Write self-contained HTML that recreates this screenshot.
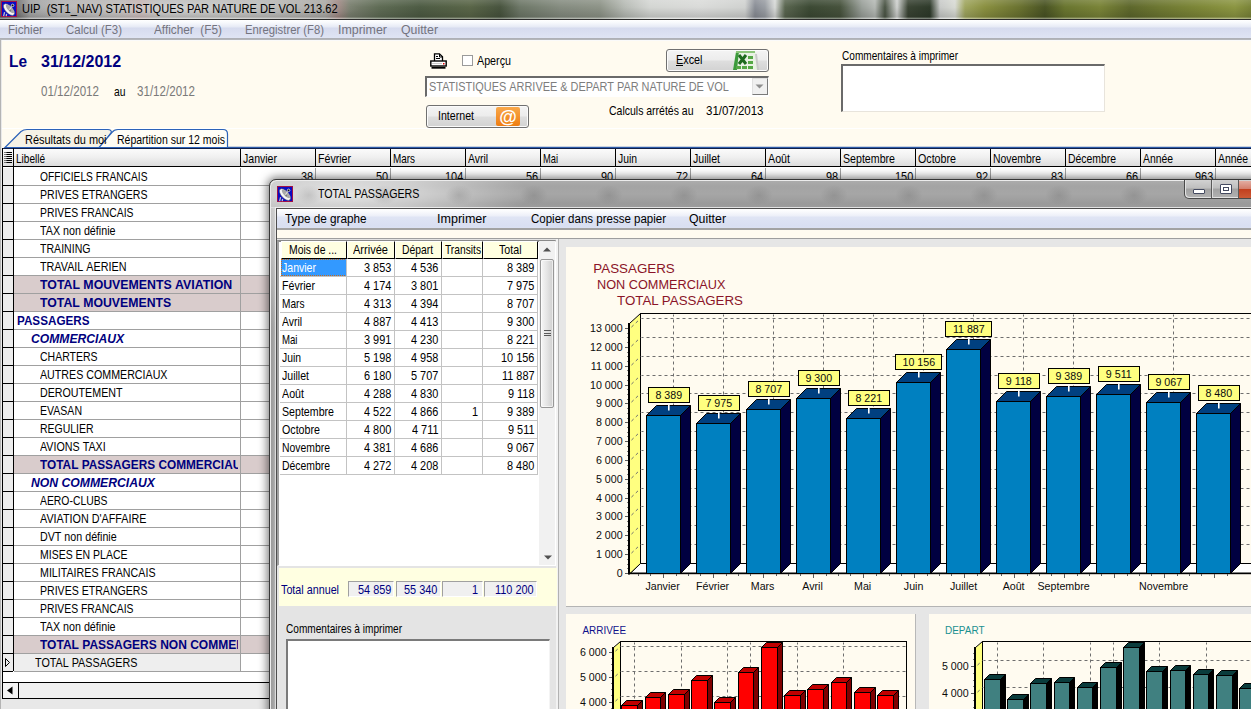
<!DOCTYPE html>
<html lang="fr"><head><meta charset="utf-8"><title>UIP (ST1_NAV) STATISTIQUES PAR NATURE DE VOL</title>
<style>
html,body{margin:0;padding:0;background:#fff;}
body{width:1251px;height:709px;overflow:hidden;position:relative;font-family:"Liberation Sans",Arial,sans-serif;}
#root{position:absolute;left:0;top:0;width:1251px;height:709px;overflow:hidden;}
#root div,#root svg,#root span.t{position:absolute;}
span.t{white-space:nowrap;transform-origin:0 50%;display:block;}
svg text{white-space:pre;}
</style></head><body><div id="root">
<div style="left:0px;top:0px;width:1251px;height:20px;background:radial-gradient(ellipse 190px 16px at 170px 9px,rgba(255,255,255,.5) 0,rgba(255,255,255,0) 100%),linear-gradient(180deg,rgba(255,255,255,.14) 0,rgba(255,255,255,0) 35%,rgba(0,0,0,.14) 86%,rgba(255,255,255,.35) 90%,rgba(255,255,255,.35) 95%,rgba(0,0,0,0) 96%),linear-gradient(90deg,#5c5c5c 0px,#6e6e6e 18px,#9a9a9a 30px,#a6a6a6 60px,#a8a4a2 120px,#b09a98 140px,#a9a9a7 160px,#adadab 250px,#a8a6a2 325px,#a08884 338px,#7a8070 350px,#5f6c55 380px,#4e5c44 420px,#5a6648 470px,#48543e 500px,#6e7868 520px,#858c80 560px,#8e9488 600px,#b8bcb6 625px,#d4d6d3 650px,#dadbd9 700px,#d0d2d0 745px,#8a8e96 755px,#9a9ea4 765px,#d8dad8 775px,#5a6650 785px,#3c4a34 810px,#46523c 840px,#9aa09a 862px,#b4b8b4 875px,#4a5444 885px,#d0d2d0 897px,#3a4434 908px,#2e3a2a 930px,#c8cac8 940px,#d8dad4 955px,#a0a660 965px,#8a9040 985px,#6a7230 1020px,#4a5424 1045px,#6a7630 1065px,#7a8438 1100px,#5e682c 1130px,#6e7832 1160px,#7e8838 1200px,#8c9642 1235px,#7a8438 1251px);"></div>
<svg style="left:1px;top:1px" width="16" height="16" viewBox="0 0 16 16"><rect x="0" y="0" width="16" height="16" fill="#0a0ac4"/><rect x="0.5" y="0.5" width="15" height="15" fill="none" stroke="#a01048"/><path d="M3.6 11.2 L2.6 15.2 M5.6 12.8 L5.2 15.2" stroke="#c4c4c4" stroke-width="1.3" fill="none"/><ellipse cx="8" cy="8.6" rx="7.2" ry="3.6" transform="rotate(47 8 8.6)" fill="#f6f6f6" stroke="#5a5a5a" stroke-width="0.5"/><ellipse cx="8.9" cy="7.9" rx="5.6" ry="2.1" transform="rotate(47 8.9 7.9)" fill="#a8a8a8"/><path d="M8.4 8.6 L11 5.2" stroke="#ececec" stroke-width="1"/><circle cx="9.2" cy="9.6" r="0.9" fill="#7a7a7a"/><circle cx="11.6" cy="4.4" r="1.3" fill="#101010" stroke="#e4e4e4" stroke-width="0.8"/></svg>
<span class="t" style="left:22.00px;top:2.84px;font-size:12px;line-height:12px;color:#000;transform:scaleX(0.9238);">UIP&nbsp;&nbsp;(ST1_NAV)&nbsp;STATISTIQUES&nbsp;PAR&nbsp;NATURE&nbsp;DE&nbsp;VOL&nbsp;213.62</span>
<div style="left:0px;top:19px;width:1251px;height:1px;background:#2c2c2c;"></div>
<div style="left:0px;top:20px;width:1251px;height:21px;background:linear-gradient(180deg,#ffffff 0,#f6f8fc 3px,#e6eaf5 7px,#d6dbee 8px,#dfe4f3 18px,#aeb0b6 18.5px,#b4b6ba 19.5px,#fafafa 20px,#fafafa 21px);"></div>
<span class="t" style="left:8.00px;top:24.04px;font-size:12px;line-height:12px;color:#74747f;transform:scaleX(0.9720);">Fichier</span>
<span class="t" style="left:66.00px;top:24.04px;font-size:12px;line-height:12px;color:#74747f;transform:scaleX(0.9544);">Calcul&nbsp;(F3)</span>
<span class="t" style="left:154.00px;top:24.04px;font-size:12px;line-height:12px;color:#74747f;transform:scaleX(0.9836);">Afficher&nbsp;&nbsp;(F5)</span>
<span class="t" style="left:245.00px;top:24.04px;font-size:12px;line-height:12px;color:#74747f;transform:scaleX(0.9402);">Enregistrer&nbsp;(F8)</span>
<span class="t" style="left:338.00px;top:24.04px;font-size:12px;line-height:12px;color:#74747f;transform:scaleX(1.0352);">Imprimer</span>
<span class="t" style="left:401.00px;top:24.04px;font-size:12px;line-height:12px;color:#74747f;transform:scaleX(1.0274);">Quitter</span>
<div style="left:0px;top:41px;width:1251px;height:107px;background:#fffbf0;"></div>
<div style="left:0px;top:128px;width:1251px;height:1px;background:#ffffff;"></div>
<div style="left:0px;top:40px;width:2px;height:669px;background:#e9e9e9;"></div>
<div style="left:0px;top:40px;width:1px;height:669px;background:#b4b4b4;"></div>
<span class="t" style="left:9.00px;top:54.06px;font-size:16px;line-height:16px;color:#00007e;font-weight:bold;transform:scaleX(0.9640);">Le</span>
<span class="t" style="left:41.00px;top:54.06px;font-size:16px;line-height:16px;color:#00007e;font-weight:bold;">31/12/2012</span>
<span class="t" style="left:41.00px;top:84.15px;font-size:14px;line-height:14px;color:#7a7a7a;transform:scaleX(0.8277);">01/12/2012</span>
<span class="t" style="left:114.00px;top:85.00px;font-size:13px;line-height:13px;color:#000;transform:scaleX(0.7953);">au</span>
<span class="t" style="left:137.00px;top:84.15px;font-size:14px;line-height:14px;color:#7a7a7a;transform:scaleX(0.8277);">31/12/2012</span>
<svg style="left:430px;top:53px" width="17" height="17" viewBox="0 0 17 17"><path d="M4.5 8 V0.8 H9.5 L12.5 3.8 V8" fill="#fff" stroke="#000" stroke-width="1.3"/><path d="M9.5 1 V4 H12.5" fill="none" stroke="#000"/><path d="M6 3.5h2M6 5.5h4" stroke="#000"/><rect x="0.8" y="8" width="15.4" height="5" fill="#fff" stroke="#000" stroke-width="1.4"/><path d="M2.5 10.5h10" stroke="#999" stroke-dasharray="1 1"/><rect x="13" y="10" width="1.5" height="1.5" fill="#e00000"/><path d="M1.5 14.8h14" stroke="#000" stroke-width="1.8"/></svg>
<div style="left:462px;top:55px;width:11px;height:11px;background:#fff;border:1px solid #9a9a9a;box-sizing:border-box;"></div>
<span class="t" style="left:477.30px;top:54.30px;font-size:13px;line-height:13px;color:#000;transform:scaleX(0.8254);">Aperçu</span>
<div style="left:666px;top:49px;width:103px;height:23px;background:linear-gradient(180deg,#f4f4f4 0,#ececec 48%,#dedede 52%,#d2d2d2 100%);border:1px solid #707070;border-radius:3px;box-sizing:border-box;box-shadow:inset 0 0 0 1px #fbfbfb;"></div>
<span class="t" style="left:676.00px;top:53.00px;font-size:13px;line-height:13px;color:#000;transform:scaleX(0.8336);">Excel</span>
<div style="left:676px;top:65px;width:7px;height:1px;background:#000;"></div>
<svg style="left:731px;top:51px" width="30" height="20" viewBox="0 0 30 20"><path d="M2 19 L5 1 L24 1 L26 3 L27 19 Z" fill="#e9f2e4"/><path d="M2 19 L5 1 L8 0 L6 19 Z" fill="#3c9a3c"/><path d="M5 1 L24 1" stroke="#8cc67a" stroke-width="2"/><g fill="#55a845"><rect x="17" y="5" width="5" height="3"/><rect x="17" y="10" width="5" height="3"/><rect x="17" y="15" width="5" height="3"/><rect x="11" y="15" width="5" height="3"/><rect x="5" y="15" width="5" height="3"/></g><path d="M8 4 L15 13 M15 4 L8 13" stroke="#1e6a1e" stroke-width="3"/><path d="M25 3 L27 19" stroke="#c9c9c9" stroke-width="2"/></svg>
<div style="left:425px;top:76px;width:344px;height:21px;background:#fff;border-top:2px solid #6a6a6a;border-left:2px solid #6a6a6a;border-right:1px solid #fff;border-bottom:1px solid #fff;box-sizing:border-box;"></div>
<span class="t" style="left:429.40px;top:80.00px;font-size:13px;line-height:13px;color:#7d7d7d;transform:scaleX(0.8401);">STATISTIQUES&nbsp;ARRIVEE&nbsp;&amp;&nbsp;DEPART&nbsp;PAR&nbsp;NATURE&nbsp;DE&nbsp;VOL</span>
<div style="left:752px;top:78px;width:16px;height:17px;background:#f0f0f0;border-right:1px solid #7a7a7a;border-bottom:1px solid #7a7a7a;border-left:1px solid #e0e0e0;border-top:1px solid #e0e0e0;box-sizing:border-box;"></div>
<svg style="left:755px;top:84px" width="9" height="5" viewBox="0 0 9 5"><path d="M0.5 0.5 H8.5 L4.5 4.5 Z" fill="#8e8e8e"/></svg>
<div style="left:426px;top:105px;width:103px;height:23px;background:linear-gradient(180deg,#f4f4f4 0,#ececec 48%,#dedede 52%,#d2d2d2 100%);border:1px solid #707070;border-radius:3px;box-sizing:border-box;box-shadow:inset 0 0 0 1px #fbfbfb;"></div>
<span class="t" style="left:437.50px;top:109.00px;font-size:13px;line-height:13px;color:#000;transform:scaleX(0.8166);">Internet</span>
<svg style="left:496px;top:107px" width="25" height="19" viewBox="0 0 25 19"><defs><linearGradient id="og" x1="0" y1="0" x2="0" y2="1"><stop offset="0" stop-color="#f9a84a"/><stop offset="1" stop-color="#ee7d12"/></linearGradient></defs><rect x="0" y="0" width="24" height="19" rx="2" fill="url(#og)"/><text x="12" y="15.5" font-family="Liberation Sans, sans-serif" font-size="18" font-weight="bold" fill="#fff" text-anchor="middle">@</text></svg>
<span class="t" style="left:609.00px;top:104.00px;font-size:13px;line-height:13px;color:#000;transform:scaleX(0.8065);">Calculs&nbsp;arrétés&nbsp;au</span>
<span class="t" style="left:706.00px;top:104.00px;font-size:13px;line-height:13px;color:#000;transform:scaleX(0.8837);">31/07/2013</span>
<span class="t" style="left:841.50px;top:48.50px;font-size:13px;line-height:13px;color:#000;transform:scaleX(0.7757);">Commentaires&nbsp;à&nbsp;imprimer</span>
<div style="left:841px;top:64px;width:264px;height:48px;background:#fff;border-top:2px solid #6a6a6a;border-left:2px solid #6a6a6a;border-right:1px solid #e8e4dc;border-bottom:1px solid #e8e4dc;box-sizing:border-box;"></div>
<svg style="left:0;top:128px" width="1251" height="21" viewBox="0 0 1251 21"><path d="M1251 19.5 H228" stroke="#2c5aa8" stroke-width="1.4" fill="none"/><path d="M5 19.5 L21 3.5 Q23.5 1.5 27 1.5 H108 Q111 1.5 111.5 4 L100 19.5 Z" fill="#f6f2e6" stroke="#2c62b8" stroke-width="1.2"/><path d="M99 19.5 L112 4.5 Q114 1.5 118 1.5 H223 Q227.5 1.5 227.5 6 V19.5 Z" fill="#fffdf6" stroke="#2c62b8" stroke-width="1.2"/><path d="M5 19.8 H100" stroke="#2c62b8" stroke-width="1"/></svg>
<div style="left:0;top:130px;width:106.5px;height:18px;overflow:hidden">
<span class="t" style="left:25.00px;top:2.50px;font-size:13px;line-height:13px;color:#000;transform:scaleX(0.8420);">Résultats&nbsp;du&nbsp;mois</span>
</div>
<span class="t" style="left:117.00px;top:132.50px;font-size:13px;line-height:13px;color:#000;transform:scaleX(0.8079);">Répartition&nbsp;sur&nbsp;12&nbsp;mois</span>
<div style="left:2px;top:148px;width:1249px;height:561px;background:#fff;"></div>
<div style="left:2px;top:148px;width:1249px;height:19px;background:linear-gradient(180deg,#fbfbfb 0,#efefef 50%,#dcdcdc 100%);border-top:1px solid #10204a;border-bottom:1px solid #000;box-sizing:border-box;"></div>
<div style="left:2px;top:148px;width:1px;height:534px;background:#000;"></div>
<div style="left:13px;top:148px;width:1px;height:523px;background:#000;"></div>
<span class="t" style="left:15.70px;top:152.00px;font-size:13px;line-height:13px;color:#000;transform:scaleX(0.7716);">Libellé</span>
<div style="left:240px;top:149px;width:1px;height:18px;background:#000;"></div>
<span class="t" style="left:242.70px;top:152.00px;font-size:13px;line-height:13px;color:#000;transform:scaleX(0.8113);">Janvier</span>
<div style="left:315px;top:149px;width:1px;height:18px;background:#000;"></div>
<span class="t" style="left:317.70px;top:152.00px;font-size:13px;line-height:13px;color:#000;transform:scaleX(0.8158);">Février</span>
<div style="left:390px;top:149px;width:1px;height:18px;background:#000;"></div>
<span class="t" style="left:392.70px;top:152.00px;font-size:13px;line-height:13px;color:#000;transform:scaleX(0.7615);">Mars</span>
<div style="left:465px;top:149px;width:1px;height:18px;background:#000;"></div>
<span class="t" style="left:467.70px;top:152.00px;font-size:13px;line-height:13px;color:#000;transform:scaleX(0.7986);">Avril</span>
<div style="left:540px;top:149px;width:1px;height:18px;background:#000;"></div>
<span class="t" style="left:542.70px;top:152.00px;font-size:13px;line-height:13px;color:#000;transform:scaleX(0.7160);">Mai</span>
<div style="left:615px;top:149px;width:1px;height:18px;background:#000;"></div>
<span class="t" style="left:617.70px;top:152.00px;font-size:13px;line-height:13px;color:#000;transform:scaleX(0.7967);">Juin</span>
<div style="left:690px;top:149px;width:1px;height:18px;background:#000;"></div>
<span class="t" style="left:692.70px;top:152.00px;font-size:13px;line-height:13px;color:#000;transform:scaleX(0.8123);">Juillet</span>
<div style="left:765px;top:149px;width:1px;height:18px;background:#000;"></div>
<span class="t" style="left:767.70px;top:152.00px;font-size:13px;line-height:13px;color:#000;transform:scaleX(0.8226);">Août</span>
<div style="left:840px;top:149px;width:1px;height:18px;background:#000;"></div>
<span class="t" style="left:842.70px;top:152.00px;font-size:13px;line-height:13px;color:#000;transform:scaleX(0.8177);">Septembre</span>
<div style="left:915px;top:149px;width:1px;height:18px;background:#000;"></div>
<span class="t" style="left:917.70px;top:152.00px;font-size:13px;line-height:13px;color:#000;transform:scaleX(0.8217);">Octobre</span>
<div style="left:990px;top:149px;width:1px;height:18px;background:#000;"></div>
<span class="t" style="left:992.70px;top:152.00px;font-size:13px;line-height:13px;color:#000;transform:scaleX(0.8004);">Novembre</span>
<div style="left:1065px;top:149px;width:1px;height:18px;background:#000;"></div>
<span class="t" style="left:1067.70px;top:152.00px;font-size:13px;line-height:13px;color:#000;transform:scaleX(0.8004);">Décembre</span>
<div style="left:1140px;top:149px;width:1px;height:18px;background:#000;"></div>
<span class="t" style="left:1142.70px;top:152.00px;font-size:13px;line-height:13px;color:#000;transform:scaleX(0.7980);">Année</span>
<div style="left:1215px;top:149px;width:1px;height:18px;background:#000;"></div>
<span class="t" style="left:1217.70px;top:152.00px;font-size:13px;line-height:13px;color:#000;transform:scaleX(0.7980);">Année</span>
<svg style="left:4px;top:152px" width="9" height="12" viewBox="0 0 9 12"><path d="M0.5 0.5H8M0.5 2.5H8M0.5 4.5H8M0.5 6.5H8M0.5 8.5H8M0.5 10.5H8" stroke="#000" stroke-dasharray="1 1 6 0"/><path d="M2.5 0.5H8M2.5 2.5H8M2.5 4.5H8M2.5 6.5H8M2.5 8.5H8M2.5 10.5H8" stroke="#000"/></svg>
<div style="left:3px;top:168px;width:10px;height:18px;background:#ececec;border-bottom:1px solid #000;box-sizing:border-box;"></div>
<div style="left:14px;top:185px;width:1237px;height:1px;background:#a0a0a0;"></div>
<span class="t" style="left:39.80px;top:169.60px;font-size:13px;line-height:13px;color:#000;transform:scaleX(0.7874);">OFFICIELS&nbsp;FRANCAIS</span>
<div style="left:3px;top:186px;width:10px;height:18px;background:#ececec;border-bottom:1px solid #000;box-sizing:border-box;"></div>
<div style="left:14px;top:203px;width:1237px;height:1px;background:#a0a0a0;"></div>
<span class="t" style="left:39.80px;top:187.60px;font-size:13px;line-height:13px;color:#000;transform:scaleX(0.8132);">PRIVES&nbsp;ETRANGERS</span>
<div style="left:3px;top:204px;width:10px;height:18px;background:#ececec;border-bottom:1px solid #000;box-sizing:border-box;"></div>
<div style="left:14px;top:221px;width:1237px;height:1px;background:#a0a0a0;"></div>
<span class="t" style="left:39.80px;top:205.60px;font-size:13px;line-height:13px;color:#000;transform:scaleX(0.7989);">PRIVES&nbsp;FRANCAIS</span>
<div style="left:3px;top:222px;width:10px;height:18px;background:#ececec;border-bottom:1px solid #000;box-sizing:border-box;"></div>
<div style="left:14px;top:239px;width:1237px;height:1px;background:#a0a0a0;"></div>
<span class="t" style="left:39.80px;top:223.60px;font-size:13px;line-height:13px;color:#000;transform:scaleX(0.8248);">TAX&nbsp;non&nbsp;définie</span>
<div style="left:3px;top:240px;width:10px;height:18px;background:#ececec;border-bottom:1px solid #000;box-sizing:border-box;"></div>
<div style="left:14px;top:257px;width:1237px;height:1px;background:#a0a0a0;"></div>
<span class="t" style="left:39.80px;top:241.60px;font-size:13px;line-height:13px;color:#000;transform:scaleX(0.8130);">TRAINING</span>
<div style="left:3px;top:258px;width:10px;height:18px;background:#ececec;border-bottom:1px solid #000;box-sizing:border-box;"></div>
<div style="left:14px;top:275px;width:1237px;height:1px;background:#a0a0a0;"></div>
<span class="t" style="left:39.80px;top:259.60px;font-size:13px;line-height:13px;color:#000;transform:scaleX(0.8295);">TRAVAIL&nbsp;AERIEN</span>
<div style="left:3px;top:276px;width:10px;height:18px;background:#ececec;border-bottom:1px solid #000;box-sizing:border-box;"></div>
<div style="left:14px;top:276px;width:1237px;height:17px;background:#d9cccc;"></div>
<div style="left:14px;top:293px;width:1237px;height:1px;background:#a0a0a0;"></div>
<span class="t" style="left:40.00px;top:278.20px;font-size:13px;line-height:13px;color:#00007e;font-weight:bold;transform:scaleX(0.9481);">TOTAL&nbsp;MOUVEMENTS&nbsp;AVIATION</span>
<div style="left:3px;top:294px;width:10px;height:18px;background:#ececec;border-bottom:1px solid #000;box-sizing:border-box;"></div>
<div style="left:14px;top:294px;width:1237px;height:17px;background:#d9cccc;"></div>
<div style="left:14px;top:311px;width:1237px;height:1px;background:#a0a0a0;"></div>
<span class="t" style="left:40.00px;top:296.20px;font-size:13px;line-height:13px;color:#00007e;font-weight:bold;transform:scaleX(0.9447);">TOTAL&nbsp;MOUVEMENTS</span>
<div style="left:3px;top:312px;width:10px;height:18px;background:#ececec;border-bottom:1px solid #000;box-sizing:border-box;"></div>
<div style="left:14px;top:329px;width:1237px;height:1px;background:#a0a0a0;"></div>
<span class="t" style="left:16.50px;top:314.20px;font-size:13px;line-height:13px;color:#00007e;font-weight:bold;transform:scaleX(0.8987);">PASSAGERS</span>
<div style="left:3px;top:330px;width:10px;height:18px;background:#ececec;border-bottom:1px solid #000;box-sizing:border-box;"></div>
<div style="left:14px;top:347px;width:1237px;height:1px;background:#a0a0a0;"></div>
<span class="t" style="left:30.50px;top:332.20px;font-size:13px;line-height:13px;color:#00007e;font-weight:bold;font-style:italic;transform:scaleX(0.9331);">COMMERCIAUX</span>
<div style="left:3px;top:348px;width:10px;height:18px;background:#ececec;border-bottom:1px solid #000;box-sizing:border-box;"></div>
<div style="left:14px;top:365px;width:1237px;height:1px;background:#a0a0a0;"></div>
<span class="t" style="left:39.80px;top:349.60px;font-size:13px;line-height:13px;color:#000;transform:scaleX(0.8067);">CHARTERS</span>
<div style="left:3px;top:366px;width:10px;height:18px;background:#ececec;border-bottom:1px solid #000;box-sizing:border-box;"></div>
<div style="left:14px;top:383px;width:1237px;height:1px;background:#a0a0a0;"></div>
<span class="t" style="left:39.80px;top:367.60px;font-size:13px;line-height:13px;color:#000;transform:scaleX(0.8210);">AUTRES&nbsp;COMMERCIAUX</span>
<div style="left:3px;top:384px;width:10px;height:18px;background:#ececec;border-bottom:1px solid #000;box-sizing:border-box;"></div>
<div style="left:14px;top:401px;width:1237px;height:1px;background:#a0a0a0;"></div>
<span class="t" style="left:39.80px;top:385.60px;font-size:13px;line-height:13px;color:#000;transform:scaleX(0.8218);">DEROUTEMENT</span>
<div style="left:3px;top:402px;width:10px;height:18px;background:#ececec;border-bottom:1px solid #000;box-sizing:border-box;"></div>
<div style="left:14px;top:419px;width:1237px;height:1px;background:#a0a0a0;"></div>
<span class="t" style="left:39.80px;top:403.60px;font-size:13px;line-height:13px;color:#000;transform:scaleX(0.8111);">EVASAN</span>
<div style="left:3px;top:420px;width:10px;height:18px;background:#ececec;border-bottom:1px solid #000;box-sizing:border-box;"></div>
<div style="left:14px;top:437px;width:1237px;height:1px;background:#a0a0a0;"></div>
<span class="t" style="left:39.80px;top:421.60px;font-size:13px;line-height:13px;color:#000;transform:scaleX(0.8050);">REGULIER</span>
<div style="left:3px;top:438px;width:10px;height:18px;background:#ececec;border-bottom:1px solid #000;box-sizing:border-box;"></div>
<div style="left:14px;top:455px;width:1237px;height:1px;background:#a0a0a0;"></div>
<span class="t" style="left:39.80px;top:439.60px;font-size:13px;line-height:13px;color:#000;transform:scaleX(0.8242);">AVIONS&nbsp;TAXI</span>
<div style="left:3px;top:456px;width:10px;height:18px;background:#ececec;border-bottom:1px solid #000;box-sizing:border-box;"></div>
<div style="left:14px;top:456px;width:1237px;height:17px;background:#d9cccc;"></div>
<div style="left:14px;top:473px;width:1237px;height:1px;background:#a0a0a0;"></div>
<div style="left:14px;top:456px;width:224px;height:17px;overflow:hidden">
<span class="t" style="left:26.00px;top:2.20px;font-size:13px;line-height:13px;color:#00007e;font-weight:bold;transform:scaleX(0.9106);">TOTAL&nbsp;PASSAGERS&nbsp;COMMERCIAUX</span>
</div>
<div style="left:3px;top:474px;width:10px;height:18px;background:#ececec;border-bottom:1px solid #000;box-sizing:border-box;"></div>
<div style="left:14px;top:491px;width:1237px;height:1px;background:#a0a0a0;"></div>
<span class="t" style="left:30.50px;top:476.20px;font-size:13px;line-height:13px;color:#00007e;font-weight:bold;font-style:italic;transform:scaleX(0.9382);">NON&nbsp;COMMERCIAUX</span>
<div style="left:3px;top:492px;width:10px;height:18px;background:#ececec;border-bottom:1px solid #000;box-sizing:border-box;"></div>
<div style="left:14px;top:509px;width:1237px;height:1px;background:#a0a0a0;"></div>
<span class="t" style="left:39.80px;top:493.60px;font-size:13px;line-height:13px;color:#000;transform:scaleX(0.7986);">AERO-CLUBS</span>
<div style="left:3px;top:510px;width:10px;height:18px;background:#ececec;border-bottom:1px solid #000;box-sizing:border-box;"></div>
<div style="left:14px;top:527px;width:1237px;height:1px;background:#a0a0a0;"></div>
<span class="t" style="left:39.80px;top:511.60px;font-size:13px;line-height:13px;color:#000;transform:scaleX(0.8294);">AVIATION&nbsp;D&#x27;AFFAIRE</span>
<div style="left:3px;top:528px;width:10px;height:18px;background:#ececec;border-bottom:1px solid #000;box-sizing:border-box;"></div>
<div style="left:14px;top:545px;width:1237px;height:1px;background:#a0a0a0;"></div>
<span class="t" style="left:39.80px;top:529.60px;font-size:13px;line-height:13px;color:#000;transform:scaleX(0.8227);">DVT&nbsp;non&nbsp;définie</span>
<div style="left:3px;top:546px;width:10px;height:18px;background:#ececec;border-bottom:1px solid #000;box-sizing:border-box;"></div>
<div style="left:14px;top:563px;width:1237px;height:1px;background:#a0a0a0;"></div>
<span class="t" style="left:39.80px;top:547.60px;font-size:13px;line-height:13px;color:#000;transform:scaleX(0.8074);">MISES&nbsp;EN&nbsp;PLACE</span>
<div style="left:3px;top:564px;width:10px;height:18px;background:#ececec;border-bottom:1px solid #000;box-sizing:border-box;"></div>
<div style="left:14px;top:581px;width:1237px;height:1px;background:#a0a0a0;"></div>
<span class="t" style="left:39.80px;top:565.60px;font-size:13px;line-height:13px;color:#000;transform:scaleX(0.8214);">MILITAIRES&nbsp;FRANCAIS</span>
<div style="left:3px;top:582px;width:10px;height:18px;background:#ececec;border-bottom:1px solid #000;box-sizing:border-box;"></div>
<div style="left:14px;top:599px;width:1237px;height:1px;background:#a0a0a0;"></div>
<span class="t" style="left:39.80px;top:583.60px;font-size:13px;line-height:13px;color:#000;transform:scaleX(0.8132);">PRIVES&nbsp;ETRANGERS</span>
<div style="left:3px;top:600px;width:10px;height:18px;background:#ececec;border-bottom:1px solid #000;box-sizing:border-box;"></div>
<div style="left:14px;top:617px;width:1237px;height:1px;background:#a0a0a0;"></div>
<span class="t" style="left:39.80px;top:601.60px;font-size:13px;line-height:13px;color:#000;transform:scaleX(0.7989);">PRIVES&nbsp;FRANCAIS</span>
<div style="left:3px;top:618px;width:10px;height:18px;background:#ececec;border-bottom:1px solid #000;box-sizing:border-box;"></div>
<div style="left:14px;top:635px;width:1237px;height:1px;background:#a0a0a0;"></div>
<span class="t" style="left:39.80px;top:619.60px;font-size:13px;line-height:13px;color:#000;transform:scaleX(0.8248);">TAX&nbsp;non&nbsp;définie</span>
<div style="left:3px;top:636px;width:10px;height:18px;background:#ececec;border-bottom:1px solid #000;box-sizing:border-box;"></div>
<div style="left:14px;top:636px;width:1237px;height:17px;background:#d9cccc;"></div>
<div style="left:14px;top:653px;width:1237px;height:1px;background:#a0a0a0;"></div>
<div style="left:14px;top:636px;width:224px;height:17px;overflow:hidden">
<span class="t" style="left:26.00px;top:2.20px;font-size:13px;line-height:13px;color:#00007e;font-weight:bold;transform:scaleX(0.9240);">TOTAL&nbsp;PASSAGERS&nbsp;NON&nbsp;COMMERCIAUX</span>
</div>
<div style="left:3px;top:654px;width:10px;height:18px;background:#ececec;border-bottom:1px solid #000;box-sizing:border-box;"></div>
<div style="left:14px;top:654px;width:226px;height:17px;background:#eeeeee;"></div>
<div style="left:14px;top:671px;width:1237px;height:1px;background:#a0a0a0;"></div>
<span class="t" style="left:34.50px;top:655.60px;font-size:13px;line-height:13px;color:#000;transform:scaleX(0.8289);">TOTAL&nbsp;PASSAGERS</span>
<div style="left:240px;top:168px;width:1px;height:504px;background:#a0a0a0;"></div>
<div style="left:315px;top:168px;width:1px;height:504px;background:#a0a0a0;"></div>
<div style="left:390px;top:168px;width:1px;height:504px;background:#a0a0a0;"></div>
<div style="left:465px;top:168px;width:1px;height:504px;background:#a0a0a0;"></div>
<div style="left:540px;top:168px;width:1px;height:504px;background:#a0a0a0;"></div>
<div style="left:615px;top:168px;width:1px;height:504px;background:#a0a0a0;"></div>
<div style="left:690px;top:168px;width:1px;height:504px;background:#a0a0a0;"></div>
<div style="left:765px;top:168px;width:1px;height:504px;background:#a0a0a0;"></div>
<div style="left:840px;top:168px;width:1px;height:504px;background:#a0a0a0;"></div>
<div style="left:915px;top:168px;width:1px;height:504px;background:#a0a0a0;"></div>
<div style="left:990px;top:168px;width:1px;height:504px;background:#a0a0a0;"></div>
<div style="left:1065px;top:168px;width:1px;height:504px;background:#a0a0a0;"></div>
<div style="left:1140px;top:168px;width:1px;height:504px;background:#a0a0a0;"></div>
<div style="left:1215px;top:168px;width:1px;height:504px;background:#a0a0a0;"></div>
<span class="t" style="left:301.35px;top:169.70px;font-size:13px;line-height:13px;color:#000;transform:scaleX(0.8400);">38</span>
<span class="t" style="left:376.35px;top:169.70px;font-size:13px;line-height:13px;color:#000;transform:scaleX(0.8400);">50</span>
<span class="t" style="left:445.28px;top:169.70px;font-size:13px;line-height:13px;color:#000;transform:scaleX(0.8400);">104</span>
<span class="t" style="left:526.35px;top:169.70px;font-size:13px;line-height:13px;color:#000;transform:scaleX(0.8400);">56</span>
<span class="t" style="left:601.35px;top:169.70px;font-size:13px;line-height:13px;color:#000;transform:scaleX(0.8400);">90</span>
<span class="t" style="left:676.35px;top:169.70px;font-size:13px;line-height:13px;color:#000;transform:scaleX(0.8400);">72</span>
<span class="t" style="left:751.35px;top:169.70px;font-size:13px;line-height:13px;color:#000;transform:scaleX(0.8400);">64</span>
<span class="t" style="left:826.35px;top:169.70px;font-size:13px;line-height:13px;color:#000;transform:scaleX(0.8400);">98</span>
<span class="t" style="left:895.28px;top:169.70px;font-size:13px;line-height:13px;color:#000;transform:scaleX(0.8400);">150</span>
<span class="t" style="left:976.35px;top:169.70px;font-size:13px;line-height:13px;color:#000;transform:scaleX(0.8400);">92</span>
<span class="t" style="left:1051.35px;top:169.70px;font-size:13px;line-height:13px;color:#000;transform:scaleX(0.8400);">83</span>
<span class="t" style="left:1126.35px;top:169.70px;font-size:13px;line-height:13px;color:#000;transform:scaleX(0.8400);">66</span>
<span class="t" style="left:1195.28px;top:169.70px;font-size:13px;line-height:13px;color:#000;transform:scaleX(0.8400);">963</span>
<svg style="left:4px;top:657px" width="8" height="11" viewBox="0 0 8 11"><path d="M1.5 1.5 L5.5 5.5 L1.5 9.5 Z" fill="none" stroke="#000" stroke-width="1"/></svg>
<div style="left:2px;top:682px;width:1249px;height:17px;background:#f0f0f0;border-top:1px solid #000;border-bottom:1px solid #000;box-sizing:border-box;"></div>
<div style="left:2px;top:682px;width:17px;height:17px;background:#f4f4f4;border:1px solid #000;box-sizing:border-box;"></div>
<svg style="left:6px;top:686px" width="8" height="9" viewBox="0 0 8 9"><path d="M6.5 0.5 V8.5 L1 4.5 Z" fill="#000"/></svg>
<div style="left:1px;top:699px;width:1250px;height:10px;background:#e8e8e8;"></div>
<div style="left:269px;top:179px;width:1000px;height:540px;border-radius:7px 0 0 0;box-shadow:0 0 8px 2px rgba(0,0,0,.5);background:#a9a9a9;"></div>
<div style="left:269px;top:179px;width:1000px;height:540px;border-radius:7px 0 0 0;border:1px solid #383838;box-sizing:border-box;background:radial-gradient(ellipse 190px 40px at 70px 14px,rgba(255,255,255,.72) 0,rgba(255,255,255,.45) 45%,rgba(255,255,255,0) 100%),linear-gradient(180deg,#adadad 0,#a4a4a4 6px,#a6a6a6 14px,#9a9a9a 24px,#9c9c9c 27px,#c4c4c4 27.5px,#c4c4c4 28.5px,#9c9c9c 29px,#9c9c9c 100%);box-shadow:inset 1px 1px 0 0 #ececec;"></div>
<div style="left:295px;top:185px;width:28px;height:20px;background:radial-gradient(ellipse at center,rgba(60,60,60,.16) 0,rgba(60,60,60,0) 70%);"></div>
<div style="left:370px;top:185px;width:28px;height:20px;background:radial-gradient(ellipse at center,rgba(60,60,60,.16) 0,rgba(60,60,60,0) 70%);"></div>
<div style="left:445px;top:185px;width:28px;height:20px;background:radial-gradient(ellipse at center,rgba(60,60,60,.16) 0,rgba(60,60,60,0) 70%);"></div>
<div style="left:520px;top:185px;width:28px;height:20px;background:radial-gradient(ellipse at center,rgba(60,60,60,.16) 0,rgba(60,60,60,0) 70%);"></div>
<div style="left:595px;top:185px;width:28px;height:20px;background:radial-gradient(ellipse at center,rgba(60,60,60,.16) 0,rgba(60,60,60,0) 70%);"></div>
<div style="left:670px;top:185px;width:28px;height:20px;background:radial-gradient(ellipse at center,rgba(60,60,60,.16) 0,rgba(60,60,60,0) 70%);"></div>
<div style="left:745px;top:185px;width:28px;height:20px;background:radial-gradient(ellipse at center,rgba(60,60,60,.16) 0,rgba(60,60,60,0) 70%);"></div>
<div style="left:820px;top:185px;width:28px;height:20px;background:radial-gradient(ellipse at center,rgba(60,60,60,.16) 0,rgba(60,60,60,0) 70%);"></div>
<div style="left:895px;top:185px;width:28px;height:20px;background:radial-gradient(ellipse at center,rgba(60,60,60,.16) 0,rgba(60,60,60,0) 70%);"></div>
<div style="left:970px;top:185px;width:28px;height:20px;background:radial-gradient(ellipse at center,rgba(60,60,60,.16) 0,rgba(60,60,60,0) 70%);"></div>
<div style="left:1045px;top:185px;width:28px;height:20px;background:radial-gradient(ellipse at center,rgba(60,60,60,.16) 0,rgba(60,60,60,0) 70%);"></div>
<div style="left:1120px;top:185px;width:28px;height:20px;background:radial-gradient(ellipse at center,rgba(60,60,60,.16) 0,rgba(60,60,60,0) 70%);"></div>
<div style="left:271px;top:208px;width:4.6px;height:506px;background:linear-gradient(180deg,rgba(255,255,255,.45) 0,rgba(255,255,255,0) 120px),linear-gradient(90deg,#9a9a9a 0,#a6a6a6 50%,#bcbcbc 100%);"></div>
<svg style="left:277px;top:186px" width="16" height="16" viewBox="0 0 16 16"><rect x="0" y="0" width="16" height="16" fill="#0a0ac4"/><rect x="0.5" y="0.5" width="15" height="15" fill="none" stroke="#a01048"/><path d="M3.6 11.2 L2.6 15.2 M5.6 12.8 L5.2 15.2" stroke="#c4c4c4" stroke-width="1.3" fill="none"/><ellipse cx="8" cy="8.6" rx="7.2" ry="3.6" transform="rotate(47 8 8.6)" fill="#f6f6f6" stroke="#5a5a5a" stroke-width="0.5"/><ellipse cx="8.9" cy="7.9" rx="5.6" ry="2.1" transform="rotate(47 8.9 7.9)" fill="#a8a8a8"/><path d="M8.4 8.6 L11 5.2" stroke="#ececec" stroke-width="1"/><circle cx="9.2" cy="9.6" r="0.9" fill="#7a7a7a"/><circle cx="11.6" cy="4.4" r="1.3" fill="#101010" stroke="#e4e4e4" stroke-width="0.8"/></svg>
<span class="t" style="left:318.20px;top:187.84px;font-size:12px;line-height:12px;color:#000;transform:scaleX(0.8891);">TOTAL&nbsp;PASSAGERS</span>
<div style="left:1183.7px;top:179.5px;width:80px;height:19.5px;border:1px solid #4a4a4a;border-top:none;border-radius:0 0 0 5px;box-sizing:border-box;background:linear-gradient(180deg,#d2d2d2 0,#bebebe 45%,#a2a2a2 50%,#b2b2b2 100%);box-shadow:inset 1px -1px 0 0 #e2e2e2;"></div>
<div style="left:1211.2px;top:180px;width:1px;height:18px;background:#5a5a5a;"></div>
<div style="left:1212.2px;top:180px;width:1px;height:18px;background:#dcdcdc;"></div>
<div style="left:1238px;top:180px;width:1px;height:18px;background:#5a5a5a;"></div>
<div style="left:1239px;top:180.5px;width:20px;height:17.5px;background:linear-gradient(180deg,#e3aca0 0,#d4806e 45%,#c2401f 50%,#cc5a35 100%);"></div>
<div style="left:1192.5px;top:189px;width:12px;height:5px;background:#fff;border:1px solid #444a60;box-sizing:border-box;border-radius:1px;"></div>
<div style="left:1219.5px;top:184.2px;width:12px;height:9.5px;background:#fff;border:1px solid #444a60;box-sizing:border-box;border-radius:1px;"></div>
<div style="left:1222.5px;top:187.2px;width:6px;height:3.5px;background:#fff;border:1px solid #444a60;box-sizing:border-box;"></div>
<div style="left:276px;top:208px;width:980px;height:510px;background:#e4e4e4;border:1px solid #4e4e4e;box-sizing:border-box;box-shadow:0 0 0 1px rgba(255,255,255,.5);"></div>
<div style="left:277px;top:209px;width:975px;height:20px;background:linear-gradient(180deg,#ffffff 0,#f8f9fc 3px,#eceff8 7px,#dfe4f4 8px,#d9dff1 17px,#dde2f2 20px);"></div>
<div style="left:277px;top:228px;width:975px;height:1.5px;background:#a2a2a2;"></div>
<span class="t" style="left:284.50px;top:212.84px;font-size:12px;line-height:12px;color:#000;transform:scaleX(0.9772);">Type&nbsp;de&nbsp;graphe</span>
<span class="t" style="left:437.00px;top:212.84px;font-size:12px;line-height:12px;color:#000;transform:scaleX(1.0458);">Imprimer</span>
<span class="t" style="left:530.50px;top:212.84px;font-size:12px;line-height:12px;color:#000;transform:scaleX(0.9591);">Copier&nbsp;dans&nbsp;presse&nbsp;papier</span>
<span class="t" style="left:689.00px;top:212.84px;font-size:12px;line-height:12px;color:#000;transform:scaleX(1.0274);">Quitter</span>
<div style="left:277px;top:229.5px;width:975px;height:8.5px;background:#fffbf0;"></div>
<div style="left:277px;top:237.5px;width:975px;height:1.2px;background:#9e9e9e;"></div>
<div style="left:557.5px;top:239px;width:1.2px;height:480px;background:#b2b2b2;"></div>
<div style="left:556px;top:239px;width:1.5px;height:480px;background:#f2f2f2;"></div>
<div style="left:277px;top:239.5px;width:279px;height:326.5px;background:#fff;border-top:2px solid #8a8a8a;border-left:2.5px solid #a0a0a0;border-right:1px solid #fff;border-bottom:1px solid #fff;box-sizing:border-box;"></div>
<div style="left:280.5px;top:241px;width:66.5px;height:17.5px;background:#ffffe1;border-right:1px solid #000;border-bottom:1.5px solid #000;border-left:1px solid #fff;border-top:1px solid #fff;box-sizing:border-box;"></div>
<span class="t" style="left:289.25px;top:242.70px;font-size:13px;line-height:13px;color:#000;transform:scaleX(0.8004);">Mois&nbsp;de&nbsp;...</span>
<div style="left:347px;top:241px;width:47.5px;height:17.5px;background:#ffffe1;border-right:1px solid #000;border-bottom:1.5px solid #000;border-left:1px solid #fff;border-top:1px solid #fff;box-sizing:border-box;"></div>
<span class="t" style="left:352.75px;top:242.70px;font-size:13px;line-height:13px;color:#000;transform:scaleX(0.8499);">Arrivée</span>
<div style="left:394.5px;top:241px;width:47px;height:17.5px;background:#ffffe1;border-right:1px solid #000;border-bottom:1.5px solid #000;border-left:1px solid #fff;border-top:1px solid #fff;box-sizing:border-box;"></div>
<span class="t" style="left:402.00px;top:242.70px;font-size:13px;line-height:13px;color:#000;transform:scaleX(0.7945);">Départ</span>
<div style="left:441.5px;top:241px;width:41px;height:17.5px;background:#ffffe1;border-right:1px solid #000;border-bottom:1.5px solid #000;border-left:1px solid #fff;border-top:1px solid #fff;box-sizing:border-box;"></div>
<span class="t" style="left:445.10px;top:242.70px;font-size:13px;line-height:13px;color:#000;transform:scaleX(0.7869);">Transits</span>
<div style="left:482.5px;top:241px;width:55.5px;height:17.5px;background:#ffffe1;border-right:1px solid #000;border-bottom:1.5px solid #000;border-left:1px solid #fff;border-top:1px solid #fff;box-sizing:border-box;"></div>
<span class="t" style="left:498.50px;top:242.70px;font-size:13px;line-height:13px;color:#000;transform:scaleX(0.8194);">Total</span>
<div style="left:279.5px;top:276px;width:258.5px;height:1px;background:#c3c3c3;"></div>
<div style="left:280.5px;top:259px;width:66.5px;height:17px;background:#3399ff;border:1px dotted #c66a1c;box-sizing:border-box;"></div>
<span class="t" style="left:282.30px;top:261.20px;font-size:13px;line-height:13px;color:#fff;transform:scaleX(0.8113);">Janvier</span>
<span class="t" style="left:363.97px;top:261.20px;font-size:13px;line-height:13px;color:#000;transform:scaleX(0.8400);">3&nbsp;853</span>
<span class="t" style="left:411.37px;top:261.20px;font-size:13px;line-height:13px;color:#000;transform:scaleX(0.8400);">4&nbsp;536</span>
<span class="t" style="left:507.17px;top:261.20px;font-size:13px;line-height:13px;color:#000;transform:scaleX(0.8400);">8&nbsp;389</span>
<div style="left:279.5px;top:294px;width:258.5px;height:1px;background:#c3c3c3;"></div>
<span class="t" style="left:282.30px;top:279.20px;font-size:13px;line-height:13px;color:#000;transform:scaleX(0.8158);">Février</span>
<span class="t" style="left:363.97px;top:279.20px;font-size:13px;line-height:13px;color:#000;transform:scaleX(0.8400);">4&nbsp;174</span>
<span class="t" style="left:411.37px;top:279.20px;font-size:13px;line-height:13px;color:#000;transform:scaleX(0.8400);">3&nbsp;801</span>
<span class="t" style="left:507.17px;top:279.20px;font-size:13px;line-height:13px;color:#000;transform:scaleX(0.8400);">7&nbsp;975</span>
<div style="left:279.5px;top:312px;width:258.5px;height:1px;background:#c3c3c3;"></div>
<span class="t" style="left:282.30px;top:297.20px;font-size:13px;line-height:13px;color:#000;transform:scaleX(0.7788);">Mars</span>
<span class="t" style="left:363.97px;top:297.20px;font-size:13px;line-height:13px;color:#000;transform:scaleX(0.8400);">4&nbsp;313</span>
<span class="t" style="left:411.37px;top:297.20px;font-size:13px;line-height:13px;color:#000;transform:scaleX(0.8400);">4&nbsp;394</span>
<span class="t" style="left:507.17px;top:297.20px;font-size:13px;line-height:13px;color:#000;transform:scaleX(0.8400);">8&nbsp;707</span>
<div style="left:279.5px;top:330px;width:258.5px;height:1px;background:#c3c3c3;"></div>
<span class="t" style="left:282.30px;top:315.20px;font-size:13px;line-height:13px;color:#000;transform:scaleX(0.7986);">Avril</span>
<span class="t" style="left:363.97px;top:315.20px;font-size:13px;line-height:13px;color:#000;transform:scaleX(0.8400);">4&nbsp;887</span>
<span class="t" style="left:411.37px;top:315.20px;font-size:13px;line-height:13px;color:#000;transform:scaleX(0.8400);">4&nbsp;413</span>
<span class="t" style="left:507.17px;top:315.20px;font-size:13px;line-height:13px;color:#000;transform:scaleX(0.8400);">9&nbsp;300</span>
<div style="left:279.5px;top:348px;width:258.5px;height:1px;background:#c3c3c3;"></div>
<span class="t" style="left:282.30px;top:333.20px;font-size:13px;line-height:13px;color:#000;transform:scaleX(0.7399);">Mai</span>
<span class="t" style="left:363.97px;top:333.20px;font-size:13px;line-height:13px;color:#000;transform:scaleX(0.8400);">3&nbsp;991</span>
<span class="t" style="left:411.37px;top:333.20px;font-size:13px;line-height:13px;color:#000;transform:scaleX(0.8400);">4&nbsp;230</span>
<span class="t" style="left:507.17px;top:333.20px;font-size:13px;line-height:13px;color:#000;transform:scaleX(0.8400);">8&nbsp;221</span>
<div style="left:279.5px;top:366px;width:258.5px;height:1px;background:#c3c3c3;"></div>
<span class="t" style="left:282.30px;top:351.20px;font-size:13px;line-height:13px;color:#000;transform:scaleX(0.7967);">Juin</span>
<span class="t" style="left:363.97px;top:351.20px;font-size:13px;line-height:13px;color:#000;transform:scaleX(0.8400);">5&nbsp;198</span>
<span class="t" style="left:411.37px;top:351.20px;font-size:13px;line-height:13px;color:#000;transform:scaleX(0.8400);">4&nbsp;958</span>
<span class="t" style="left:501.10px;top:351.20px;font-size:13px;line-height:13px;color:#000;transform:scaleX(0.8400);">10&nbsp;156</span>
<div style="left:279.5px;top:384px;width:258.5px;height:1px;background:#c3c3c3;"></div>
<span class="t" style="left:282.30px;top:369.20px;font-size:13px;line-height:13px;color:#000;transform:scaleX(0.8123);">Juillet</span>
<span class="t" style="left:363.97px;top:369.20px;font-size:13px;line-height:13px;color:#000;transform:scaleX(0.8400);">6&nbsp;180</span>
<span class="t" style="left:411.37px;top:369.20px;font-size:13px;line-height:13px;color:#000;transform:scaleX(0.8400);">5&nbsp;707</span>
<span class="t" style="left:501.91px;top:369.20px;font-size:13px;line-height:13px;color:#000;transform:scaleX(0.8400);">11&nbsp;887</span>
<div style="left:279.5px;top:402px;width:258.5px;height:1px;background:#c3c3c3;"></div>
<span class="t" style="left:282.30px;top:387.20px;font-size:13px;line-height:13px;color:#000;transform:scaleX(0.8226);">Août</span>
<span class="t" style="left:363.97px;top:387.20px;font-size:13px;line-height:13px;color:#000;transform:scaleX(0.8400);">4&nbsp;288</span>
<span class="t" style="left:411.37px;top:387.20px;font-size:13px;line-height:13px;color:#000;transform:scaleX(0.8400);">4&nbsp;830</span>
<span class="t" style="left:507.98px;top:387.20px;font-size:13px;line-height:13px;color:#000;transform:scaleX(0.8400);">9&nbsp;118</span>
<div style="left:279.5px;top:420px;width:258.5px;height:1px;background:#c3c3c3;"></div>
<span class="t" style="left:282.30px;top:405.20px;font-size:13px;line-height:13px;color:#000;transform:scaleX(0.8177);">Septembre</span>
<span class="t" style="left:363.97px;top:405.20px;font-size:13px;line-height:13px;color:#000;transform:scaleX(0.8400);">4&nbsp;522</span>
<span class="t" style="left:411.37px;top:405.20px;font-size:13px;line-height:13px;color:#000;transform:scaleX(0.8400);">4&nbsp;866</span>
<span class="t" style="left:472.23px;top:405.20px;font-size:13px;line-height:13px;color:#000;transform:scaleX(0.8400);">1</span>
<span class="t" style="left:507.17px;top:405.20px;font-size:13px;line-height:13px;color:#000;transform:scaleX(0.8400);">9&nbsp;389</span>
<div style="left:279.5px;top:438px;width:258.5px;height:1px;background:#c3c3c3;"></div>
<span class="t" style="left:282.30px;top:423.20px;font-size:13px;line-height:13px;color:#000;transform:scaleX(0.8217);">Octobre</span>
<span class="t" style="left:363.97px;top:423.20px;font-size:13px;line-height:13px;color:#000;transform:scaleX(0.8400);">4&nbsp;800</span>
<span class="t" style="left:412.18px;top:423.20px;font-size:13px;line-height:13px;color:#000;transform:scaleX(0.8400);">4&nbsp;711</span>
<span class="t" style="left:507.98px;top:423.20px;font-size:13px;line-height:13px;color:#000;transform:scaleX(0.8400);">9&nbsp;511</span>
<div style="left:279.5px;top:456px;width:258.5px;height:1px;background:#c3c3c3;"></div>
<span class="t" style="left:282.30px;top:441.20px;font-size:13px;line-height:13px;color:#000;transform:scaleX(0.8004);">Novembre</span>
<span class="t" style="left:363.97px;top:441.20px;font-size:13px;line-height:13px;color:#000;transform:scaleX(0.8400);">4&nbsp;381</span>
<span class="t" style="left:411.37px;top:441.20px;font-size:13px;line-height:13px;color:#000;transform:scaleX(0.8400);">4&nbsp;686</span>
<span class="t" style="left:507.17px;top:441.20px;font-size:13px;line-height:13px;color:#000;transform:scaleX(0.8400);">9&nbsp;067</span>
<div style="left:279.5px;top:474px;width:258.5px;height:1px;background:#c3c3c3;"></div>
<span class="t" style="left:282.30px;top:459.20px;font-size:13px;line-height:13px;color:#000;transform:scaleX(0.8004);">Décembre</span>
<span class="t" style="left:363.97px;top:459.20px;font-size:13px;line-height:13px;color:#000;transform:scaleX(0.8400);">4&nbsp;272</span>
<span class="t" style="left:411.37px;top:459.20px;font-size:13px;line-height:13px;color:#000;transform:scaleX(0.8400);">4&nbsp;208</span>
<span class="t" style="left:507.17px;top:459.20px;font-size:13px;line-height:13px;color:#000;transform:scaleX(0.8400);">8&nbsp;480</span>
<div style="left:346px;top:259px;width:1px;height:216px;background:#c3c3c3;"></div>
<div style="left:393.5px;top:259px;width:1px;height:216px;background:#c3c3c3;"></div>
<div style="left:440.5px;top:259px;width:1px;height:216px;background:#c3c3c3;"></div>
<div style="left:481.5px;top:259px;width:1px;height:216px;background:#c3c3c3;"></div>
<div style="left:537px;top:259px;width:1px;height:216px;background:#c3c3c3;"></div>
<div style="left:539px;top:241px;width:15.5px;height:324px;background:#f1f1f1;"></div>
<div style="left:540px;top:259px;width:14px;height:148.5px;border:1px solid #979797;border-radius:2px;box-sizing:border-box;background:linear-gradient(90deg,#f6f6f6 0,#e6e6e6 45%,#cfcfcf 100%);box-shadow:inset 0 0 0 1px rgba(255,255,255,.6);"></div>
<div style="left:543.5px;top:330px;width:7px;height:1px;background:#5a5a5a;"></div>
<div style="left:543.5px;top:332.5px;width:7px;height:1px;background:#5a5a5a;"></div>
<div style="left:543.5px;top:335px;width:7px;height:1px;background:#5a5a5a;"></div>
<svg style="left:543px;top:247px" width="8" height="5" viewBox="0 0 8 5"><path d="M0 4.5 L4 0.5 L8 4.5 Z" fill="#505050"/></svg>
<svg style="left:543.5px;top:555px" width="8" height="5" viewBox="0 0 8 5"><path d="M0 0.5 L4 4.5 L8 0.5 Z" fill="#505050"/></svg>
<div style="left:278.5px;top:567.5px;width:278px;height:38px;background:#ffffe1;"></div>
<span class="t" style="left:281.30px;top:582.70px;font-size:13px;line-height:13px;color:#00007e;transform:scaleX(0.8273);">Total&nbsp;annuel</span>
<div style="left:348px;top:581px;width:45.8px;height:16px;background:#f0f0f0;border-top:1px solid #a0a0a0;border-left:1px solid #a0a0a0;border-right:1px solid #fff;border-bottom:1px solid #fff;box-sizing:border-box;"></div>
<span class="t" style="left:357.90px;top:582.70px;font-size:13px;line-height:13px;color:#00007e;transform:scaleX(0.8400);">54&nbsp;859</span>
<div style="left:395.5px;top:581px;width:45.3px;height:16px;background:#f0f0f0;border-top:1px solid #a0a0a0;border-left:1px solid #a0a0a0;border-right:1px solid #fff;border-bottom:1px solid #fff;box-sizing:border-box;"></div>
<span class="t" style="left:404.10px;top:582.70px;font-size:13px;line-height:13px;color:#00007e;transform:scaleX(0.8400);">55&nbsp;340</span>
<div style="left:442px;top:581px;width:40.5px;height:16px;background:#f0f0f0;border-top:1px solid #a0a0a0;border-left:1px solid #a0a0a0;border-right:1px solid #fff;border-bottom:1px solid #fff;box-sizing:border-box;"></div>
<span class="t" style="left:472.23px;top:582.70px;font-size:13px;line-height:13px;color:#00007e;transform:scaleX(0.8400);">1</span>
<div style="left:484.3px;top:581px;width:52.5px;height:16px;background:#f0f0f0;border-top:1px solid #a0a0a0;border-left:1px solid #a0a0a0;border-right:1px solid #fff;border-bottom:1px solid #fff;box-sizing:border-box;"></div>
<span class="t" style="left:495.14px;top:582.70px;font-size:13px;line-height:13px;color:#00007e;transform:scaleX(0.8400);">110&nbsp;200</span>
<span class="t" style="left:285.50px;top:622.00px;font-size:13px;line-height:13px;color:#000;transform:scaleX(0.7757);">Commentaires&nbsp;à&nbsp;imprimer</span>
<div style="left:285.5px;top:639px;width:264px;height:80px;background:#fff;border-top:2px solid #7a7a7a;border-left:2px solid #7a7a7a;border-right:1px solid #f4f4f4;box-sizing:border-box;"></div>
<div style="left:559px;top:239px;width:700px;height:480px;background:#e6e6e6;"></div>
<svg style="left:566px;top:247px" width="690" height="359" viewBox="566 247 690 359"><rect x="566" y="247" width="690" height="359" fill="#fffbf0"/><rect x="640.5" y="313.5" width="636" height="250" fill="#fffbf0" stroke="#000"/><polygon points="630,573.5 640.5,563.5 1276.5,563.5 1266,573.5" fill="#fff" stroke="#000"/><polygon points="630,573.5 640.5,563.5 640.5,313.5 630,323.5" fill="#ffff80"/><path d="M629.5 323.5 L640.5 313.5 V563.5 L630 573.5" fill="none" stroke="#000"/><path d="M630 554.5 L640.5 544.5" stroke="#6e6e6e" stroke-dasharray="3 3" stroke-dashoffset="-2"/><path d="M641.5 544.5 H1276.5" stroke="#6e6e6e" stroke-dasharray="3 3" stroke-dashoffset="1"/><path d="M630 535.5 L640.5 525.5" stroke="#6e6e6e" stroke-dasharray="3 3" stroke-dashoffset="-2"/><path d="M641.5 525.5 H1276.5" stroke="#6e6e6e" stroke-dasharray="3 3" stroke-dashoffset="1"/><path d="M630 516.5 L640.5 506.5" stroke="#6e6e6e" stroke-dasharray="3 3" stroke-dashoffset="-2"/><path d="M641.5 506.5 H1276.5" stroke="#6e6e6e" stroke-dasharray="3 3" stroke-dashoffset="1"/><path d="M630 498.5 L640.5 488.5" stroke="#6e6e6e" stroke-dasharray="3 3" stroke-dashoffset="-2"/><path d="M641.5 488.5 H1276.5" stroke="#6e6e6e" stroke-dasharray="3 3" stroke-dashoffset="1"/><path d="M630 479.5 L640.5 469.5" stroke="#6e6e6e" stroke-dasharray="3 3" stroke-dashoffset="-2"/><path d="M641.5 469.5 H1276.5" stroke="#6e6e6e" stroke-dasharray="3 3" stroke-dashoffset="1"/><path d="M630 460.5 L640.5 450.5" stroke="#6e6e6e" stroke-dasharray="3 3" stroke-dashoffset="-2"/><path d="M641.5 450.5 H1276.5" stroke="#6e6e6e" stroke-dasharray="3 3" stroke-dashoffset="1"/><path d="M630 441.5 L640.5 431.5" stroke="#6e6e6e" stroke-dasharray="3 3" stroke-dashoffset="-2"/><path d="M641.5 431.5 H1276.5" stroke="#6e6e6e" stroke-dasharray="3 3" stroke-dashoffset="1"/><path d="M630 422.5 L640.5 412.5" stroke="#6e6e6e" stroke-dasharray="3 3" stroke-dashoffset="-2"/><path d="M641.5 412.5 H1276.5" stroke="#6e6e6e" stroke-dasharray="3 3" stroke-dashoffset="1"/><path d="M630 403.5 L640.5 393.5" stroke="#6e6e6e" stroke-dasharray="3 3" stroke-dashoffset="-2"/><path d="M641.5 393.5 H1276.5" stroke="#6e6e6e" stroke-dasharray="3 3" stroke-dashoffset="1"/><path d="M630 385.5 L640.5 375.5" stroke="#6e6e6e" stroke-dasharray="3 3" stroke-dashoffset="-2"/><path d="M641.5 375.5 H1276.5" stroke="#6e6e6e" stroke-dasharray="3 3" stroke-dashoffset="1"/><path d="M630 366.5 L640.5 356.5" stroke="#6e6e6e" stroke-dasharray="3 3" stroke-dashoffset="-2"/><path d="M641.5 356.5 H1276.5" stroke="#6e6e6e" stroke-dasharray="3 3" stroke-dashoffset="1"/><path d="M630 347.5 L640.5 337.5" stroke="#6e6e6e" stroke-dasharray="3 3" stroke-dashoffset="-2"/><path d="M641.5 337.5 H1276.5" stroke="#6e6e6e" stroke-dasharray="3 3" stroke-dashoffset="1"/><path d="M630 328.5 L640.5 318.5" stroke="#6e6e6e" stroke-dasharray="3 3" stroke-dashoffset="-2"/><path d="M641.5 318.5 H1276.5" stroke="#6e6e6e" stroke-dasharray="3 3" stroke-dashoffset="1"/><path d="M673.5 314.5 V563.5" stroke="#6e6e6e" stroke-dasharray="3 3" stroke-dashoffset="1"/><path d="M723.5 314.5 V563.5" stroke="#6e6e6e" stroke-dasharray="3 3" stroke-dashoffset="1"/><path d="M773.5 314.5 V563.5" stroke="#6e6e6e" stroke-dasharray="3 3" stroke-dashoffset="1"/><path d="M823.5 314.5 V563.5" stroke="#6e6e6e" stroke-dasharray="3 3" stroke-dashoffset="1"/><path d="M873.5 314.5 V563.5" stroke="#6e6e6e" stroke-dasharray="3 3" stroke-dashoffset="1"/><path d="M923.5 314.5 V563.5" stroke="#6e6e6e" stroke-dasharray="3 3" stroke-dashoffset="1"/><path d="M973.5 314.5 V563.5" stroke="#6e6e6e" stroke-dasharray="3 3" stroke-dashoffset="1"/><path d="M1023.5 314.5 V563.5" stroke="#6e6e6e" stroke-dasharray="3 3" stroke-dashoffset="1"/><path d="M1073.5 314.5 V563.5" stroke="#6e6e6e" stroke-dasharray="3 3" stroke-dashoffset="1"/><path d="M1173.5 314.5 V563.5" stroke="#6e6e6e" stroke-dasharray="3 3" stroke-dashoffset="1"/><rect x="628" y="323" width="2" height="251.5" fill="#000"/><rect x="628" y="572.5" width="648.5" height="1.7" fill="#000"/><path d="M625 573.5 H628" stroke="#5c5c5c"/><text x="622.6" y="577.2" font-family="Liberation Sans, sans-serif" font-size="10.67" text-anchor="end" fill="#0c0c0c">0</text><path d="M625 554.5 H628" stroke="#5c5c5c"/><text x="622.6" y="558.2" font-family="Liberation Sans, sans-serif" font-size="10.67" text-anchor="end" fill="#0c0c0c">1 000</text><path d="M625 535.5 H628" stroke="#5c5c5c"/><text x="622.6" y="539.2" font-family="Liberation Sans, sans-serif" font-size="10.67" text-anchor="end" fill="#0c0c0c">2 000</text><path d="M625 516.5 H628" stroke="#5c5c5c"/><text x="622.6" y="520.2" font-family="Liberation Sans, sans-serif" font-size="10.67" text-anchor="end" fill="#0c0c0c">3 000</text><path d="M625 498.5 H628" stroke="#5c5c5c"/><text x="622.6" y="502.2" font-family="Liberation Sans, sans-serif" font-size="10.67" text-anchor="end" fill="#0c0c0c">4 000</text><path d="M625 479.5 H628" stroke="#5c5c5c"/><text x="622.6" y="483.2" font-family="Liberation Sans, sans-serif" font-size="10.67" text-anchor="end" fill="#0c0c0c">5 000</text><path d="M625 460.5 H628" stroke="#5c5c5c"/><text x="622.6" y="464.2" font-family="Liberation Sans, sans-serif" font-size="10.67" text-anchor="end" fill="#0c0c0c">6 000</text><path d="M625 441.5 H628" stroke="#5c5c5c"/><text x="622.6" y="445.2" font-family="Liberation Sans, sans-serif" font-size="10.67" text-anchor="end" fill="#0c0c0c">7 000</text><path d="M625 422.5 H628" stroke="#5c5c5c"/><text x="622.6" y="426.2" font-family="Liberation Sans, sans-serif" font-size="10.67" text-anchor="end" fill="#0c0c0c">8 000</text><path d="M625 403.5 H628" stroke="#5c5c5c"/><text x="622.6" y="407.2" font-family="Liberation Sans, sans-serif" font-size="10.67" text-anchor="end" fill="#0c0c0c">9 000</text><path d="M625 385.5 H628" stroke="#5c5c5c"/><text x="622.6" y="389.2" font-family="Liberation Sans, sans-serif" font-size="10.67" text-anchor="end" fill="#0c0c0c">10 000</text><path d="M625 366.5 H628" stroke="#5c5c5c"/><text x="622.6" y="370.2" font-family="Liberation Sans, sans-serif" font-size="10.67" text-anchor="end" fill="#0c0c0c">11 000</text><path d="M625 347.5 H628" stroke="#5c5c5c"/><text x="622.6" y="351.2" font-family="Liberation Sans, sans-serif" font-size="10.67" text-anchor="end" fill="#0c0c0c">12 000</text><path d="M625 328.5 H628" stroke="#5c5c5c"/><text x="622.6" y="332.2" font-family="Liberation Sans, sans-serif" font-size="10.67" text-anchor="end" fill="#0c0c0c">13 000</text><path d="M627 568.5 H628" stroke="#5c5c5c" stroke-opacity=".8"/><path d="M627 564.5 H628" stroke="#5c5c5c" stroke-opacity=".8"/><path d="M627 559.5 H628" stroke="#5c5c5c" stroke-opacity=".8"/><path d="M627 549.5 H628" stroke="#5c5c5c" stroke-opacity=".8"/><path d="M627 545.5 H628" stroke="#5c5c5c" stroke-opacity=".8"/><path d="M627 540.5 H628" stroke="#5c5c5c" stroke-opacity=".8"/><path d="M627 531.5 H628" stroke="#5c5c5c" stroke-opacity=".8"/><path d="M627 526.5 H628" stroke="#5c5c5c" stroke-opacity=".8"/><path d="M627 521.5 H628" stroke="#5c5c5c" stroke-opacity=".8"/><path d="M627 512.5 H628" stroke="#5c5c5c" stroke-opacity=".8"/><path d="M627 507.5 H628" stroke="#5c5c5c" stroke-opacity=".8"/><path d="M627 502.5 H628" stroke="#5c5c5c" stroke-opacity=".8"/><path d="M627 493.5 H628" stroke="#5c5c5c" stroke-opacity=".8"/><path d="M627 488.5 H628" stroke="#5c5c5c" stroke-opacity=".8"/><path d="M627 483.5 H628" stroke="#5c5c5c" stroke-opacity=".8"/><path d="M627 474.5 H628" stroke="#5c5c5c" stroke-opacity=".8"/><path d="M627 469.5 H628" stroke="#5c5c5c" stroke-opacity=".8"/><path d="M627 465.5 H628" stroke="#5c5c5c" stroke-opacity=".8"/><path d="M627 455.5 H628" stroke="#5c5c5c" stroke-opacity=".8"/><path d="M627 451.5 H628" stroke="#5c5c5c" stroke-opacity=".8"/><path d="M627 446.5 H628" stroke="#5c5c5c" stroke-opacity=".8"/><path d="M627 436.5 H628" stroke="#5c5c5c" stroke-opacity=".8"/><path d="M627 432.5 H628" stroke="#5c5c5c" stroke-opacity=".8"/><path d="M627 427.5 H628" stroke="#5c5c5c" stroke-opacity=".8"/><path d="M627 418.5 H628" stroke="#5c5c5c" stroke-opacity=".8"/><path d="M627 413.5 H628" stroke="#5c5c5c" stroke-opacity=".8"/><path d="M627 408.5 H628" stroke="#5c5c5c" stroke-opacity=".8"/><path d="M627 399.5 H628" stroke="#5c5c5c" stroke-opacity=".8"/><path d="M627 394.5 H628" stroke="#5c5c5c" stroke-opacity=".8"/><path d="M627 389.5 H628" stroke="#5c5c5c" stroke-opacity=".8"/><path d="M627 380.5 H628" stroke="#5c5c5c" stroke-opacity=".8"/><path d="M627 375.5 H628" stroke="#5c5c5c" stroke-opacity=".8"/><path d="M627 370.5 H628" stroke="#5c5c5c" stroke-opacity=".8"/><path d="M627 361.5 H628" stroke="#5c5c5c" stroke-opacity=".8"/><path d="M627 356.5 H628" stroke="#5c5c5c" stroke-opacity=".8"/><path d="M627 352.5 H628" stroke="#5c5c5c" stroke-opacity=".8"/><path d="M627 342.5 H628" stroke="#5c5c5c" stroke-opacity=".8"/><path d="M627 337.5 H628" stroke="#5c5c5c" stroke-opacity=".8"/><path d="M627 333.5 H628" stroke="#5c5c5c" stroke-opacity=".8"/><polygon points="680.5,573.5 690.5,563.5 690.5,405.5 680.5,415.5" fill="#000040" stroke="#000"/><polygon points="646.5,415.5 656.5,405.5 690.5,405.5 680.5,415.5" fill="#004080" stroke="#000"/><rect x="646.5" y="415.5" width="34" height="158" fill="#0080c0" stroke="#000"/><polygon points="730.5,573.5 740.5,563.5 740.5,413.5 730.5,423.5" fill="#000040" stroke="#000"/><polygon points="696.5,423.5 706.5,413.5 740.5,413.5 730.5,423.5" fill="#004080" stroke="#000"/><rect x="696.5" y="423.5" width="34" height="150" fill="#0080c0" stroke="#000"/><polygon points="780.5,573.5 790.5,563.5 790.5,399.5 780.5,409.5" fill="#000040" stroke="#000"/><polygon points="746.5,409.5 756.5,399.5 790.5,399.5 780.5,409.5" fill="#004080" stroke="#000"/><rect x="746.5" y="409.5" width="34" height="164" fill="#0080c0" stroke="#000"/><polygon points="830.5,573.5 840.5,563.5 840.5,388.5 830.5,398.5" fill="#000040" stroke="#000"/><polygon points="796.5,398.5 806.5,388.5 840.5,388.5 830.5,398.5" fill="#004080" stroke="#000"/><rect x="796.5" y="398.5" width="34" height="175" fill="#0080c0" stroke="#000"/><polygon points="880.5,573.5 890.5,563.5 890.5,408.5 880.5,418.5" fill="#000040" stroke="#000"/><polygon points="846.5,418.5 856.5,408.5 890.5,408.5 880.5,418.5" fill="#004080" stroke="#000"/><rect x="846.5" y="418.5" width="34" height="155" fill="#0080c0" stroke="#000"/><polygon points="930.5,573.5 940.5,563.5 940.5,372.5 930.5,382.5" fill="#000040" stroke="#000"/><polygon points="896.5,382.5 906.5,372.5 940.5,372.5 930.5,382.5" fill="#004080" stroke="#000"/><rect x="896.5" y="382.5" width="34" height="191" fill="#0080c0" stroke="#000"/><polygon points="980.5,573.5 990.5,563.5 990.5,339.5 980.5,349.5" fill="#000040" stroke="#000"/><polygon points="946.5,349.5 956.5,339.5 990.5,339.5 980.5,349.5" fill="#004080" stroke="#000"/><rect x="946.5" y="349.5" width="34" height="224" fill="#0080c0" stroke="#000"/><polygon points="1030.5,573.5 1040.5,563.5 1040.5,391.5 1030.5,401.5" fill="#000040" stroke="#000"/><polygon points="996.5,401.5 1006.5,391.5 1040.5,391.5 1030.5,401.5" fill="#004080" stroke="#000"/><rect x="996.5" y="401.5" width="34" height="172" fill="#0080c0" stroke="#000"/><polygon points="1080.5,573.5 1090.5,563.5 1090.5,386.5 1080.5,396.5" fill="#000040" stroke="#000"/><polygon points="1046.5,396.5 1056.5,386.5 1090.5,386.5 1080.5,396.5" fill="#004080" stroke="#000"/><rect x="1046.5" y="396.5" width="34" height="177" fill="#0080c0" stroke="#000"/><polygon points="1130.5,573.5 1140.5,563.5 1140.5,384.5 1130.5,394.5" fill="#000040" stroke="#000"/><polygon points="1096.5,394.5 1106.5,384.5 1140.5,384.5 1130.5,394.5" fill="#004080" stroke="#000"/><rect x="1096.5" y="394.5" width="34" height="179" fill="#0080c0" stroke="#000"/><polygon points="1180.5,573.5 1190.5,563.5 1190.5,392.5 1180.5,402.5" fill="#000040" stroke="#000"/><polygon points="1146.5,402.5 1156.5,392.5 1190.5,392.5 1180.5,402.5" fill="#004080" stroke="#000"/><rect x="1146.5" y="402.5" width="34" height="171" fill="#0080c0" stroke="#000"/><polygon points="1230.5,573.5 1240.5,563.5 1240.5,403.5 1230.5,413.5" fill="#000040" stroke="#000"/><polygon points="1196.5,413.5 1206.5,403.5 1240.5,403.5 1230.5,413.5" fill="#004080" stroke="#000"/><rect x="1196.5" y="413.5" width="34" height="160" fill="#0080c0" stroke="#000"/><path d="M668.5 402.5 V410.5" stroke="#fff" stroke-width="1"/><path d="M669.5 402.5 V410.5" stroke="#fff" stroke-opacity=".6" stroke-width="1"/><rect x="648.5" y="387.5" width="41" height="15" fill="#ffff80" stroke="#000"/><text x="668.8" y="399.1" font-family="Liberation Sans, sans-serif" font-size="10.67" text-anchor="middle" fill="#0c0c0c">8 389</text><path d="M718.5 410.5 V418.5" stroke="#fff" stroke-width="1"/><path d="M719.5 410.5 V418.5" stroke="#fff" stroke-opacity=".6" stroke-width="1"/><rect x="698.5" y="395.5" width="41" height="15" fill="#ffff80" stroke="#000"/><text x="718.8" y="407.1" font-family="Liberation Sans, sans-serif" font-size="10.67" text-anchor="middle" fill="#0c0c0c">7 975</text><path d="M768.5 396.5 V404.5" stroke="#fff" stroke-width="1"/><path d="M769.5 396.5 V404.5" stroke="#fff" stroke-opacity=".6" stroke-width="1"/><rect x="748.5" y="381.5" width="41" height="15" fill="#ffff80" stroke="#000"/><text x="768.8" y="393.1" font-family="Liberation Sans, sans-serif" font-size="10.67" text-anchor="middle" fill="#0c0c0c">8 707</text><path d="M818.5 385.5 V393.5" stroke="#fff" stroke-width="1"/><path d="M819.5 385.5 V393.5" stroke="#fff" stroke-opacity=".6" stroke-width="1"/><rect x="798.5" y="370.5" width="41" height="15" fill="#ffff80" stroke="#000"/><text x="818.8" y="382.1" font-family="Liberation Sans, sans-serif" font-size="10.67" text-anchor="middle" fill="#0c0c0c">9 300</text><path d="M868.5 405.5 V413.5" stroke="#fff" stroke-width="1"/><path d="M869.5 405.5 V413.5" stroke="#fff" stroke-opacity=".6" stroke-width="1"/><rect x="848.5" y="390.5" width="41" height="15" fill="#ffff80" stroke="#000"/><text x="868.8" y="402.1" font-family="Liberation Sans, sans-serif" font-size="10.67" text-anchor="middle" fill="#0c0c0c">8 221</text><path d="M918.5 369.5 V377.5" stroke="#fff" stroke-width="1"/><path d="M919.5 369.5 V377.5" stroke="#fff" stroke-opacity=".6" stroke-width="1"/><rect x="895.5" y="354.5" width="46" height="15" fill="#ffff80" stroke="#000"/><text x="918.8" y="366.1" font-family="Liberation Sans, sans-serif" font-size="10.67" text-anchor="middle" fill="#0c0c0c">10 156</text><path d="M968.5 336.5 V344.5" stroke="#fff" stroke-width="1"/><path d="M969.5 336.5 V344.5" stroke="#fff" stroke-opacity=".6" stroke-width="1"/><rect x="945.5" y="321.5" width="46" height="15" fill="#ffff80" stroke="#000"/><text x="968.8" y="333.1" font-family="Liberation Sans, sans-serif" font-size="10.67" text-anchor="middle" fill="#0c0c0c">11 887</text><path d="M1018.5 388.5 V396.5" stroke="#fff" stroke-width="1"/><path d="M1019.5 388.5 V396.5" stroke="#fff" stroke-opacity=".6" stroke-width="1"/><rect x="998.5" y="373.5" width="41" height="15" fill="#ffff80" stroke="#000"/><text x="1018.8" y="385.1" font-family="Liberation Sans, sans-serif" font-size="10.67" text-anchor="middle" fill="#0c0c0c">9 118</text><path d="M1068.5 383.5 V391.5" stroke="#fff" stroke-width="1"/><path d="M1069.5 383.5 V391.5" stroke="#fff" stroke-opacity=".6" stroke-width="1"/><rect x="1048.5" y="368.5" width="41" height="15" fill="#ffff80" stroke="#000"/><text x="1068.8" y="380.1" font-family="Liberation Sans, sans-serif" font-size="10.67" text-anchor="middle" fill="#0c0c0c">9 389</text><path d="M1118.5 381.5 V389.5" stroke="#fff" stroke-width="1"/><path d="M1119.5 381.5 V389.5" stroke="#fff" stroke-opacity=".6" stroke-width="1"/><rect x="1098.5" y="366.5" width="41" height="15" fill="#ffff80" stroke="#000"/><text x="1118.8" y="378.1" font-family="Liberation Sans, sans-serif" font-size="10.67" text-anchor="middle" fill="#0c0c0c">9 511</text><path d="M1168.5 389.5 V397.5" stroke="#fff" stroke-width="1"/><path d="M1169.5 389.5 V397.5" stroke="#fff" stroke-opacity=".6" stroke-width="1"/><rect x="1148.5" y="374.5" width="41" height="15" fill="#ffff80" stroke="#000"/><text x="1168.8" y="386.1" font-family="Liberation Sans, sans-serif" font-size="10.67" text-anchor="middle" fill="#0c0c0c">9 067</text><path d="M1218.5 400.5 V408.5" stroke="#fff" stroke-width="1"/><path d="M1219.5 400.5 V408.5" stroke="#fff" stroke-opacity=".6" stroke-width="1"/><rect x="1198.5" y="385.5" width="41" height="15" fill="#ffff80" stroke="#000"/><text x="1218.8" y="397.1" font-family="Liberation Sans, sans-serif" font-size="10.67" text-anchor="middle" fill="#0c0c0c">8 480</text><path d="M663.5 574 V578" stroke="#5c5c5c"/><path d="M638.5 574 V576" stroke="#5c5c5c"/><path d="M650.5 574 V576" stroke="#5c5c5c"/><path d="M676.5 574 V576" stroke="#5c5c5c"/><text x="662.6" y="589.7" font-family="Liberation Sans, sans-serif" font-size="10.67" text-anchor="middle" fill="#0c0c0c">Janvier</text><path d="M713.5 574 V578" stroke="#5c5c5c"/><path d="M688.5 574 V576" stroke="#5c5c5c"/><path d="M700.5 574 V576" stroke="#5c5c5c"/><path d="M726.5 574 V576" stroke="#5c5c5c"/><text x="712.6" y="589.7" font-family="Liberation Sans, sans-serif" font-size="10.67" text-anchor="middle" fill="#0c0c0c">Février</text><path d="M763.5 574 V578" stroke="#5c5c5c"/><path d="M738.5 574 V576" stroke="#5c5c5c"/><path d="M750.5 574 V576" stroke="#5c5c5c"/><path d="M776.5 574 V576" stroke="#5c5c5c"/><text x="762.6" y="589.7" font-family="Liberation Sans, sans-serif" font-size="10.67" text-anchor="middle" fill="#0c0c0c">Mars</text><path d="M813.5 574 V578" stroke="#5c5c5c"/><path d="M788.5 574 V576" stroke="#5c5c5c"/><path d="M800.5 574 V576" stroke="#5c5c5c"/><path d="M826.5 574 V576" stroke="#5c5c5c"/><text x="812.6" y="589.7" font-family="Liberation Sans, sans-serif" font-size="10.67" text-anchor="middle" fill="#0c0c0c">Avril</text><path d="M863.5 574 V578" stroke="#5c5c5c"/><path d="M838.5 574 V576" stroke="#5c5c5c"/><path d="M850.5 574 V576" stroke="#5c5c5c"/><path d="M876.5 574 V576" stroke="#5c5c5c"/><text x="862.6" y="589.7" font-family="Liberation Sans, sans-serif" font-size="10.67" text-anchor="middle" fill="#0c0c0c">Mai</text><path d="M914.5 574 V578" stroke="#5c5c5c"/><path d="M889.5 574 V576" stroke="#5c5c5c"/><path d="M901.5 574 V576" stroke="#5c5c5c"/><path d="M927.5 574 V576" stroke="#5c5c5c"/><text x="913.6" y="589.7" font-family="Liberation Sans, sans-serif" font-size="10.67" text-anchor="middle" fill="#0c0c0c">Juin</text><path d="M964.5 574 V578" stroke="#5c5c5c"/><path d="M939.5 574 V576" stroke="#5c5c5c"/><path d="M951.5 574 V576" stroke="#5c5c5c"/><path d="M977.5 574 V576" stroke="#5c5c5c"/><text x="963.6" y="589.7" font-family="Liberation Sans, sans-serif" font-size="10.67" text-anchor="middle" fill="#0c0c0c">Juillet</text><path d="M1014.5 574 V578" stroke="#5c5c5c"/><path d="M989.5 574 V576" stroke="#5c5c5c"/><path d="M1001.5 574 V576" stroke="#5c5c5c"/><path d="M1027.5 574 V576" stroke="#5c5c5c"/><text x="1013.6" y="589.7" font-family="Liberation Sans, sans-serif" font-size="10.67" text-anchor="middle" fill="#0c0c0c">Août</text><path d="M1064.5 574 V578" stroke="#5c5c5c"/><path d="M1039.5 574 V576" stroke="#5c5c5c"/><path d="M1051.5 574 V576" stroke="#5c5c5c"/><path d="M1077.5 574 V576" stroke="#5c5c5c"/><text x="1063.6" y="589.7" font-family="Liberation Sans, sans-serif" font-size="10.67" text-anchor="middle" fill="#0c0c0c">Septembre</text><path d="M1114.5 574 V578" stroke="#5c5c5c"/><path d="M1089.5 574 V576" stroke="#5c5c5c"/><path d="M1101.5 574 V576" stroke="#5c5c5c"/><path d="M1127.5 574 V576" stroke="#5c5c5c"/><path d="M1164.5 574 V578" stroke="#5c5c5c"/><path d="M1139.5 574 V576" stroke="#5c5c5c"/><path d="M1151.5 574 V576" stroke="#5c5c5c"/><path d="M1177.5 574 V576" stroke="#5c5c5c"/><text x="1163.6" y="589.7" font-family="Liberation Sans, sans-serif" font-size="10.67" text-anchor="middle" fill="#0c0c0c">Novembre</text><path d="M1214.5 574 V578" stroke="#5c5c5c"/><path d="M1189.5 574 V576" stroke="#5c5c5c"/><path d="M1201.5 574 V576" stroke="#5c5c5c"/><path d="M1227.5 574 V576" stroke="#5c5c5c"/><text x="593.3" y="273.2" font-family="Liberation Sans, sans-serif" font-size="13.33" fill="#8a1428" textLength="81.5" lengthAdjust="spacingAndGlyphs">PASSAGERS</text><text x="597" y="288.95" font-family="Liberation Sans, sans-serif" font-size="13.33" fill="#8a1428" textLength="128.5" lengthAdjust="spacingAndGlyphs">NON COMMERCIAUX</text><text x="617" y="304.7" font-family="Liberation Sans, sans-serif" font-size="13.33" fill="#8a1428" textLength="126" lengthAdjust="spacingAndGlyphs">TOTAL PASSAGERS</text></svg>
<div style="left:566px;top:605.5px;width:690px;height:1px;background:#b4b4b4;"></div>
<svg style="left:566px;top:614px" width="349.5" height="100" viewBox="566 614 349.5 100"><rect x="566" y="614" width="349.5" height="100" fill="#fffbf0"/><rect x="620.5" y="641.5" width="286" height="253" fill="#fffbf0" stroke="#000"/><polygon points="614,900.5 620.5,894.5 906.5,894.5 900,900.5" fill="#fff" stroke="#000"/><polygon points="614,900.5 620.5,894.5 620.5,641.5 614,647.5" fill="#ffff80"/><path d="M613.5 647.5 L620.5 641.5 V894.5 L614 900.5" fill="none" stroke="#000"/><path d="M614 652.5 L620.5 646.5" stroke="#6e6e6e" stroke-dasharray="3 3" stroke-dashoffset="-2"/><path d="M621.5 646.5 H906.5" stroke="#6e6e6e" stroke-dasharray="3 3" stroke-dashoffset="1"/><path d="M614 677.5 L620.5 671.5" stroke="#6e6e6e" stroke-dasharray="3 3" stroke-dashoffset="-2"/><path d="M621.5 671.5 H906.5" stroke="#6e6e6e" stroke-dasharray="3 3" stroke-dashoffset="1"/><path d="M614 702.5 L620.5 696.5" stroke="#6e6e6e" stroke-dasharray="3 3" stroke-dashoffset="-2"/><path d="M621.5 696.5 H906.5" stroke="#6e6e6e" stroke-dasharray="3 3" stroke-dashoffset="1"/><path d="M634.5 642.5 V894.5" stroke="#6e6e6e" stroke-dasharray="3 3" stroke-dashoffset="1"/><path d="M681.5 642.5 V894.5" stroke="#6e6e6e" stroke-dasharray="3 3" stroke-dashoffset="1"/><path d="M727.5 642.5 V894.5" stroke="#6e6e6e" stroke-dasharray="3 3" stroke-dashoffset="1"/><path d="M750.5 642.5 V894.5" stroke="#6e6e6e" stroke-dasharray="3 3" stroke-dashoffset="1"/><path d="M797.5 642.5 V894.5" stroke="#6e6e6e" stroke-dasharray="3 3" stroke-dashoffset="1"/><path d="M843.5 642.5 V894.5" stroke="#6e6e6e" stroke-dasharray="3 3" stroke-dashoffset="1"/><rect x="612" y="647" width="2" height="254.5" fill="#000"/><rect x="612" y="899.5" width="294.5" height="1.7" fill="#000"/><path d="M609 652.5 H612" stroke="#5c5c5c"/><text x="606.6" y="656.2" font-family="Liberation Sans, sans-serif" font-size="10.67" text-anchor="end" fill="#0c0c0c">6 000</text><path d="M609 677.5 H612" stroke="#5c5c5c"/><text x="606.6" y="681.2" font-family="Liberation Sans, sans-serif" font-size="10.67" text-anchor="end" fill="#0c0c0c">5 000</text><path d="M609 702.5 H612" stroke="#5c5c5c"/><text x="606.6" y="706.2" font-family="Liberation Sans, sans-serif" font-size="10.67" text-anchor="end" fill="#0c0c0c">4 000</text><path d="M611 764.5 H612" stroke="#5c5c5c" stroke-opacity=".8"/><path d="M611 758.5 H612" stroke="#5c5c5c" stroke-opacity=".8"/><path d="M611 745.5 H612" stroke="#5c5c5c" stroke-opacity=".8"/><path d="M611 739.5 H612" stroke="#5c5c5c" stroke-opacity=".8"/><path d="M611 733.5 H612" stroke="#5c5c5c" stroke-opacity=".8"/><path d="M611 720.5 H612" stroke="#5c5c5c" stroke-opacity=".8"/><path d="M611 714.5 H612" stroke="#5c5c5c" stroke-opacity=".8"/><path d="M611 708.5 H612" stroke="#5c5c5c" stroke-opacity=".8"/><path d="M611 695.5 H612" stroke="#5c5c5c" stroke-opacity=".8"/><path d="M611 689.5 H612" stroke="#5c5c5c" stroke-opacity=".8"/><path d="M611 683.5 H612" stroke="#5c5c5c" stroke-opacity=".8"/><path d="M611 670.5 H612" stroke="#5c5c5c" stroke-opacity=".8"/><path d="M611 664.5 H612" stroke="#5c5c5c" stroke-opacity=".8"/><path d="M611 658.5 H612" stroke="#5c5c5c" stroke-opacity=".8"/><polygon points="637.5,900.5 642.5,895.5 642.5,700.5 637.5,705.5" fill="#800000" stroke="#000"/><polygon points="621.5,705.5 626.5,700.5 642.5,700.5 637.5,705.5" fill="#c00000" stroke="#000"/><rect x="621.5" y="705.5" width="16" height="195" fill="#ff0000" stroke="#000"/><polygon points="660.5,900.5 665.5,895.5 665.5,692.5 660.5,697.5" fill="#800000" stroke="#000"/><polygon points="645.5,697.5 650.5,692.5 665.5,692.5 660.5,697.5" fill="#c00000" stroke="#000"/><rect x="645.5" y="697.5" width="15" height="203" fill="#ff0000" stroke="#000"/><polygon points="684.5,900.5 689.5,895.5 689.5,689.5 684.5,694.5" fill="#800000" stroke="#000"/><polygon points="668.5,694.5 673.5,689.5 689.5,689.5 684.5,694.5" fill="#c00000" stroke="#000"/><rect x="668.5" y="694.5" width="16" height="206" fill="#ff0000" stroke="#000"/><polygon points="707.5,900.5 712.5,895.5 712.5,675.5 707.5,680.5" fill="#800000" stroke="#000"/><polygon points="691.5,680.5 696.5,675.5 712.5,675.5 707.5,680.5" fill="#c00000" stroke="#000"/><rect x="691.5" y="680.5" width="16" height="220" fill="#ff0000" stroke="#000"/><polygon points="730.5,900.5 735.5,895.5 735.5,697.5 730.5,702.5" fill="#800000" stroke="#000"/><polygon points="714.5,702.5 719.5,697.5 735.5,697.5 730.5,702.5" fill="#c00000" stroke="#000"/><rect x="714.5" y="702.5" width="16" height="198" fill="#ff0000" stroke="#000"/><polygon points="753.5,900.5 758.5,895.5 758.5,667.5 753.5,672.5" fill="#800000" stroke="#000"/><polygon points="738.5,672.5 743.5,667.5 758.5,667.5 753.5,672.5" fill="#c00000" stroke="#000"/><rect x="738.5" y="672.5" width="15" height="228" fill="#ff0000" stroke="#000"/><polygon points="777.5,900.5 782.5,895.5 782.5,642.5 777.5,647.5" fill="#800000" stroke="#000"/><polygon points="761.5,647.5 766.5,642.5 782.5,642.5 777.5,647.5" fill="#c00000" stroke="#000"/><rect x="761.5" y="647.5" width="16" height="253" fill="#ff0000" stroke="#000"/><polygon points="800.5,900.5 805.5,895.5 805.5,690.5 800.5,695.5" fill="#800000" stroke="#000"/><polygon points="784.5,695.5 789.5,690.5 805.5,690.5 800.5,695.5" fill="#c00000" stroke="#000"/><rect x="784.5" y="695.5" width="16" height="205" fill="#ff0000" stroke="#000"/><polygon points="823.5,900.5 828.5,895.5 828.5,684.5 823.5,689.5" fill="#800000" stroke="#000"/><polygon points="807.5,689.5 812.5,684.5 828.5,684.5 823.5,689.5" fill="#c00000" stroke="#000"/><rect x="807.5" y="689.5" width="16" height="211" fill="#ff0000" stroke="#000"/><polygon points="846.5,900.5 851.5,895.5 851.5,677.5 846.5,682.5" fill="#800000" stroke="#000"/><polygon points="831.5,682.5 836.5,677.5 851.5,677.5 846.5,682.5" fill="#c00000" stroke="#000"/><rect x="831.5" y="682.5" width="15" height="218" fill="#ff0000" stroke="#000"/><polygon points="870.5,900.5 875.5,895.5 875.5,687.5 870.5,692.5" fill="#800000" stroke="#000"/><polygon points="854.5,692.5 859.5,687.5 875.5,687.5 870.5,692.5" fill="#c00000" stroke="#000"/><rect x="854.5" y="692.5" width="16" height="208" fill="#ff0000" stroke="#000"/><polygon points="893.5,900.5 898.5,895.5 898.5,690.5 893.5,695.5" fill="#800000" stroke="#000"/><polygon points="877.5,695.5 882.5,690.5 898.5,690.5 893.5,695.5" fill="#c00000" stroke="#000"/><rect x="877.5" y="695.5" width="16" height="205" fill="#ff0000" stroke="#000"/><text x="582.5" y="633.8" font-family="Liberation Sans, sans-serif" font-size="10.67" fill="#10108a" textLength="43.5" lengthAdjust="spacingAndGlyphs">ARRIVEE</text></svg>
<div style="left:915px;top:614px;width:1px;height:100px;background:#b8b8b8;"></div>
<svg style="left:929px;top:614px" width="330" height="100" viewBox="929 614 330 100"><rect x="929" y="614" width="330" height="100" fill="#fffbf0"/><rect x="982.5" y="641.5" width="297" height="253" fill="#fffbf0" stroke="#000"/><polygon points="976,900.5 982.5,894.5 1279.5,894.5 1273,900.5" fill="#fff" stroke="#000"/><polygon points="976,900.5 982.5,894.5 982.5,641.5 976,647.5" fill="#ffff80"/><path d="M975.5 647.5 L982.5 641.5 V894.5 L976 900.5" fill="none" stroke="#000"/><path d="M976 666.5 L982.5 660.5" stroke="#6e6e6e" stroke-dasharray="3 3" stroke-dashoffset="-2"/><path d="M983.5 660.5 H1279.5" stroke="#6e6e6e" stroke-dasharray="3 3" stroke-dashoffset="1"/><path d="M976 693.5 L982.5 687.5" stroke="#6e6e6e" stroke-dasharray="3 3" stroke-dashoffset="-2"/><path d="M983.5 687.5 H1279.5" stroke="#6e6e6e" stroke-dasharray="3 3" stroke-dashoffset="1"/><path d="M997.5 642.5 V894.5" stroke="#6e6e6e" stroke-dasharray="3 3" stroke-dashoffset="1"/><path d="M1043.5 642.5 V894.5" stroke="#6e6e6e" stroke-dasharray="3 3" stroke-dashoffset="1"/><path d="M1090.5 642.5 V894.5" stroke="#6e6e6e" stroke-dasharray="3 3" stroke-dashoffset="1"/><path d="M1113.5 642.5 V894.5" stroke="#6e6e6e" stroke-dasharray="3 3" stroke-dashoffset="1"/><path d="M1159.5 642.5 V894.5" stroke="#6e6e6e" stroke-dasharray="3 3" stroke-dashoffset="1"/><path d="M1206.5 642.5 V894.5" stroke="#6e6e6e" stroke-dasharray="3 3" stroke-dashoffset="1"/><rect x="974" y="647" width="2" height="254.5" fill="#000"/><rect x="974" y="899.5" width="305.5" height="1.7" fill="#000"/><path d="M971 666.5 H974" stroke="#5c5c5c"/><text x="968.6" y="670.2" font-family="Liberation Sans, sans-serif" font-size="10.67" text-anchor="end" fill="#0c0c0c">5 000</text><path d="M971 693.5 H974" stroke="#5c5c5c"/><text x="968.6" y="697.2" font-family="Liberation Sans, sans-serif" font-size="10.67" text-anchor="end" fill="#0c0c0c">4 000</text><path d="M973 761.5 H974" stroke="#5c5c5c" stroke-opacity=".8"/><path d="M973 754.5 H974" stroke="#5c5c5c" stroke-opacity=".8"/><path d="M973 740.5 H974" stroke="#5c5c5c" stroke-opacity=".8"/><path d="M973 734.5 H974" stroke="#5c5c5c" stroke-opacity=".8"/><path d="M973 727.5 H974" stroke="#5c5c5c" stroke-opacity=".8"/><path d="M973 713.5 H974" stroke="#5c5c5c" stroke-opacity=".8"/><path d="M973 707.5 H974" stroke="#5c5c5c" stroke-opacity=".8"/><path d="M973 700.5 H974" stroke="#5c5c5c" stroke-opacity=".8"/><path d="M973 686.5 H974" stroke="#5c5c5c" stroke-opacity=".8"/><path d="M973 680.5 H974" stroke="#5c5c5c" stroke-opacity=".8"/><path d="M973 673.5 H974" stroke="#5c5c5c" stroke-opacity=".8"/><path d="M973 659.5 H974" stroke="#5c5c5c" stroke-opacity=".8"/><path d="M973 653.5 H974" stroke="#5c5c5c" stroke-opacity=".8"/><polygon points="1000.5,900.5 1005.5,895.5 1005.5,674.5 1000.5,679.5" fill="#000000" stroke="#000"/><polygon points="984.5,679.5 989.5,674.5 1005.5,674.5 1000.5,679.5" fill="#0a3c3c" stroke="#000"/><rect x="984.5" y="679.5" width="16" height="221" fill="#408080" stroke="#000"/><polygon points="1023.5,900.5 1028.5,895.5 1028.5,694.5 1023.5,699.5" fill="#000000" stroke="#000"/><polygon points="1007.5,699.5 1012.5,694.5 1028.5,694.5 1023.5,699.5" fill="#0a3c3c" stroke="#000"/><rect x="1007.5" y="699.5" width="16" height="201" fill="#408080" stroke="#000"/><polygon points="1046.5,900.5 1051.5,895.5 1051.5,678.5 1046.5,683.5" fill="#000000" stroke="#000"/><polygon points="1030.5,683.5 1035.5,678.5 1051.5,678.5 1046.5,683.5" fill="#0a3c3c" stroke="#000"/><rect x="1030.5" y="683.5" width="16" height="217" fill="#408080" stroke="#000"/><polygon points="1069.5,900.5 1074.5,895.5 1074.5,677.5 1069.5,682.5" fill="#000000" stroke="#000"/><polygon points="1054.5,682.5 1059.5,677.5 1074.5,677.5 1069.5,682.5" fill="#0a3c3c" stroke="#000"/><rect x="1054.5" y="682.5" width="15" height="218" fill="#408080" stroke="#000"/><polygon points="1092.5,900.5 1097.5,895.5 1097.5,682.5 1092.5,687.5" fill="#000000" stroke="#000"/><polygon points="1077.5,687.5 1082.5,682.5 1097.5,682.5 1092.5,687.5" fill="#0a3c3c" stroke="#000"/><rect x="1077.5" y="687.5" width="15" height="213" fill="#408080" stroke="#000"/><polygon points="1116.5,900.5 1121.5,895.5 1121.5,662.5 1116.5,667.5" fill="#000000" stroke="#000"/><polygon points="1100.5,667.5 1105.5,662.5 1121.5,662.5 1116.5,667.5" fill="#0a3c3c" stroke="#000"/><rect x="1100.5" y="667.5" width="16" height="233" fill="#408080" stroke="#000"/><polygon points="1139.5,900.5 1144.5,895.5 1144.5,642.5 1139.5,647.5" fill="#000000" stroke="#000"/><polygon points="1123.5,647.5 1128.5,642.5 1144.5,642.5 1139.5,647.5" fill="#0a3c3c" stroke="#000"/><rect x="1123.5" y="647.5" width="16" height="253" fill="#408080" stroke="#000"/><polygon points="1162.5,900.5 1167.5,895.5 1167.5,666.5 1162.5,671.5" fill="#000000" stroke="#000"/><polygon points="1146.5,671.5 1151.5,666.5 1167.5,666.5 1162.5,671.5" fill="#0a3c3c" stroke="#000"/><rect x="1146.5" y="671.5" width="16" height="229" fill="#408080" stroke="#000"/><polygon points="1185.5,900.5 1190.5,895.5 1190.5,665.5 1185.5,670.5" fill="#000000" stroke="#000"/><polygon points="1170.5,670.5 1175.5,665.5 1190.5,665.5 1185.5,670.5" fill="#0a3c3c" stroke="#000"/><rect x="1170.5" y="670.5" width="15" height="230" fill="#408080" stroke="#000"/><polygon points="1208.5,900.5 1213.5,895.5 1213.5,669.5 1208.5,674.5" fill="#000000" stroke="#000"/><polygon points="1193.5,674.5 1198.5,669.5 1213.5,669.5 1208.5,674.5" fill="#0a3c3c" stroke="#000"/><rect x="1193.5" y="674.5" width="15" height="226" fill="#408080" stroke="#000"/><polygon points="1232.5,900.5 1237.5,895.5 1237.5,670.5 1232.5,675.5" fill="#000000" stroke="#000"/><polygon points="1216.5,675.5 1221.5,670.5 1237.5,670.5 1232.5,675.5" fill="#0a3c3c" stroke="#000"/><rect x="1216.5" y="675.5" width="16" height="225" fill="#408080" stroke="#000"/><polygon points="1255.5,900.5 1260.5,895.5 1260.5,683.5 1255.5,688.5" fill="#000000" stroke="#000"/><polygon points="1239.5,688.5 1244.5,683.5 1260.5,683.5 1255.5,688.5" fill="#0a3c3c" stroke="#000"/><rect x="1239.5" y="688.5" width="16" height="212" fill="#408080" stroke="#000"/><text x="945" y="633.8" font-family="Liberation Sans, sans-serif" font-size="10.67" fill="#1a9090" textLength="39.5" lengthAdjust="spacingAndGlyphs">DEPART</text></svg>
</div></body></html>
